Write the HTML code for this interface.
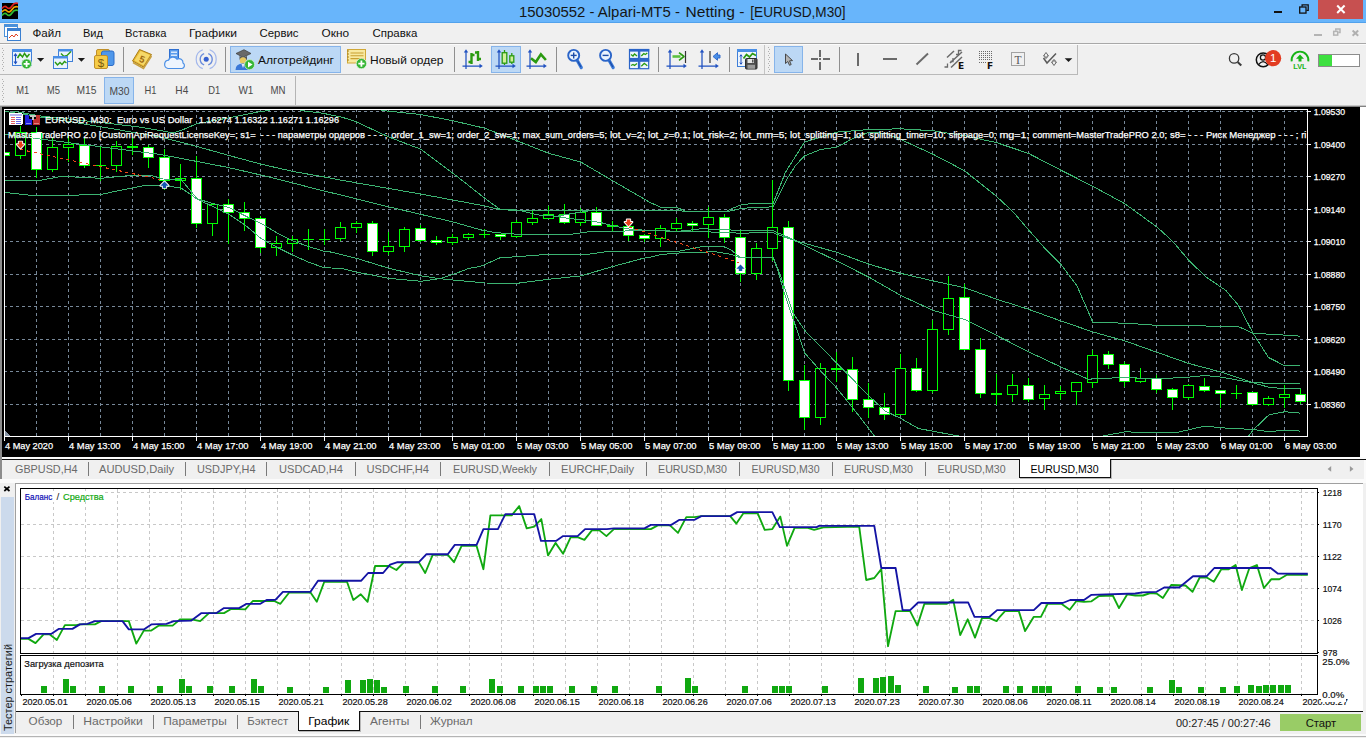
<!DOCTYPE html>
<html lang="ru"><head><meta charset="utf-8"><title>15030552 - Alpari-MT5 - Netting - [EURUSD,M30]</title>
<style>html,body{margin:0;padding:0;background:#f0f0f0;overflow:hidden}svg{display:block}text{white-space:pre}</style></head>
<body>
<svg width="1366" height="738" viewBox="0 0 1366 738" font-family="Liberation Sans, sans-serif" shape-rendering="crispEdges">
<rect x="0" y="0" width="1366" height="738" fill="#f0f0f0" />
<rect x="0" y="0" width="1366" height="22.5" fill="#68b5fb" />
<rect x="0" y="21.5" width="1366" height="1" fill="#52a2ec" />
<text x="519" y="16.8" font-size="14.3" fill="#151515" textLength="160.9" lengthAdjust="spacingAndGlyphs" >15030552 - Alpari-MT5 -</text>
<text x="685.5" y="16.8" font-size="14.3" fill="#151515" textLength="58.9" lengthAdjust="spacingAndGlyphs" >Netting -</text>
<text x="750.3" y="16.8" font-size="14.3" fill="#151515" textLength="95.3" lengthAdjust="spacingAndGlyphs" >[EURUSD,M30]</text>
<rect x="2" y="3" width="16" height="16" fill="#000" />
<g shape-rendering="auto" fill="none" stroke-width="1.7"><path d="M2 8.500 q2.500 -3.500 5 -1 t5 -1.500 t6 -2.500" stroke="#e02020"/><path d="M2 12 q2.500 -3.500 5 -1 t5 -1.500 t6 -2.500" stroke="#f0a000"/><path d="M2 15.500 q2.500 -3.500 5 -1 t5 -1.500 t6 -2.500" stroke="#30c030"/></g>
<rect x="1318" y="0" width="45" height="19" fill="#c75050" />
<g shape-rendering="auto" stroke="#fff" stroke-width="2"><line x1="1337.200" y1="5.500" x2="1344.600" y2="13"/><line x1="1344.600" y1="5.500" x2="1337.200" y2="13"/></g>
<rect x="1274" y="10.5" width="8" height="2.5" fill="#111" />
<g fill="none" stroke="#111" stroke-width="1.300" shape-rendering="auto"><path d="M1302.100 6.800 v-2 h6.100 v5.600 h-1.800"/><rect x="1299.700" y="7" width="6.300" height="6.100"/></g>
<rect x="0" y="22.5" width="1366" height="21" fill="#f0f0f0" />
<g><rect x="4.500" y="24.500" width="13" height="12" fill="#fff" stroke="#4a90d9"/><rect x="4" y="24" width="14" height="3" fill="#4a90d9"/><rect x="7.500" y="28.500" width="13" height="12" fill="#fff" stroke="#3a7fd0"/><rect x="7" y="28" width="14" height="3" fill="#3a7fd0"/><path d="M9 38 l3 -3 l2 2 l2 -3 l2 2" fill="none" stroke="#e04020" shape-rendering="auto"/></g>
<text x="32.5" y="37.3" font-size="11.6" fill="#111" textLength="28.5" lengthAdjust="spacingAndGlyphs" >Файл</text>
<text x="83" y="37.3" font-size="11.6" fill="#111" textLength="20" lengthAdjust="spacingAndGlyphs" >Вид</text>
<text x="125" y="37.3" font-size="11.6" fill="#111" textLength="41.5" lengthAdjust="spacingAndGlyphs" >Вставка</text>
<text x="189" y="37.3" font-size="11.6" fill="#111" textLength="48" lengthAdjust="spacingAndGlyphs" >Графики</text>
<text x="259.5" y="37.3" font-size="11.6" fill="#111" textLength="39" lengthAdjust="spacingAndGlyphs" >Сервис</text>
<text x="321.5" y="37.3" font-size="11.6" fill="#111" textLength="27.5" lengthAdjust="spacingAndGlyphs" >Окно</text>
<text x="372.5" y="37.3" font-size="11.6" fill="#111" textLength="45" lengthAdjust="spacingAndGlyphs" >Справка</text>
<rect x="1314" y="33.5" width="7.7" height="2.4" fill="#b4b4b4" />
<g fill="none" stroke="#b4b4b4" stroke-width="1.500" shape-rendering="auto"><path d="M1335.800 30.700 v-1.700 h4.200 v3.600 h-1.700"/><rect x="1333.700" y="31.400" width="4" height="3.700"/></g>
<g shape-rendering="auto" stroke="#b0b0b0" stroke-width="1.900"><line x1="1352.600" y1="30.500" x2="1358.200" y2="35.700"/><line x1="1358.200" y1="30.500" x2="1352.600" y2="35.700"/></g>
<rect x="0" y="43" width="1366" height="1" fill="#a8a8a8" />
<rect x="0" y="44" width="1366" height="1" fill="#fbfbfb" />
<rect x="0" y="74" width="1077" height="1" fill="#b9b9b9" />
<rect x="1076.5" y="45" width="1" height="30" fill="#b9b9b9" />
<rect x="2" y="48" width="1" height="1" fill="#b0b0b0" />
<rect x="3" y="50" width="1" height="1" fill="#b0b0b0" />
<rect x="2" y="52" width="1" height="1" fill="#b0b0b0" />
<rect x="3" y="54" width="1" height="1" fill="#b0b0b0" />
<rect x="2" y="56" width="1" height="1" fill="#b0b0b0" />
<rect x="3" y="58" width="1" height="1" fill="#b0b0b0" />
<rect x="2" y="60" width="1" height="1" fill="#b0b0b0" />
<rect x="3" y="62" width="1" height="1" fill="#b0b0b0" />
<rect x="2" y="64" width="1" height="1" fill="#b0b0b0" />
<rect x="3" y="66" width="1" height="1" fill="#b0b0b0" />
<rect x="2" y="68" width="1" height="1" fill="#b0b0b0" />
<rect x="3" y="70" width="1" height="1" fill="#b0b0b0" />
<rect x="2" y="79" width="1" height="1" fill="#b0b0b0" />
<rect x="3" y="81" width="1" height="1" fill="#b0b0b0" />
<rect x="2" y="83" width="1" height="1" fill="#b0b0b0" />
<rect x="3" y="85" width="1" height="1" fill="#b0b0b0" />
<rect x="2" y="87" width="1" height="1" fill="#b0b0b0" />
<rect x="3" y="89" width="1" height="1" fill="#b0b0b0" />
<rect x="2" y="91" width="1" height="1" fill="#b0b0b0" />
<rect x="3" y="93" width="1" height="1" fill="#b0b0b0" />
<rect x="2" y="95" width="1" height="1" fill="#b0b0b0" />
<rect x="3" y="97" width="1" height="1" fill="#b0b0b0" />
<rect x="2" y="99" width="1" height="1" fill="#b0b0b0" />
<rect x="3" y="101" width="1" height="1" fill="#b0b0b0" />
<g shape-rendering="auto">
<g><rect x="12.500" y="49.500" width="19" height="16" fill="#eaf3fd" stroke="#3f7fd8"/><rect x="12" y="49" width="20" height="3" fill="#4a8fe6"/><path d="M17.500 58 l2.500 -4 l2.500 3 l2 -3.500 l2.500 3.500 l2.500 -3" fill="none" stroke="#2a9a10" stroke-width="1.500"/><path d="M15.500 54 v9.500 M14 56 l1.500 -2 l1.500 2 M14 61.500 l1.500 2 l1.500 -2" stroke="#1f50c0" fill="none" stroke-width="1.100"/><circle cx="26.600" cy="63.900" r="5" fill="#35b535" stroke="#e8f8e8" stroke-width="0.700"/><path d="M23.600 63.900 h6 M26.600 60.900 v6" stroke="#fff" stroke-width="1.800"/></g>
<path d="M37 58 h7.200 l-3.600 3.700 z" fill="#1a1a1a"/>
<g><rect x="58.500" y="49.500" width="14" height="12" fill="#eaf3fd" stroke="#3f7fd8"/><rect x="58" y="49" width="15" height="2.500" fill="#4a8fe6"/><path d="M61 53.500 l3 3 l3 -1 l4 -4" fill="none" stroke="#2a9a10" stroke-width="1.400"/><rect x="53.500" y="56.500" width="14" height="12" fill="#eaf3fd" stroke="#3f7fd8"/><rect x="53" y="56" width="15" height="2.500" fill="#4a8fe6"/><path d="M55 62 l2.500 3 l2.500 -2.500 l2 2 l2.500 -3 l2 1.500" fill="none" stroke="#2a9a10" stroke-width="1.400"/></g>
<path d="M77.800 58 h7.200 l-3.600 3.700 z" fill="#1a1a1a"/>
<g><rect x="96.500" y="49.500" width="13" height="9" rx="1.500" fill="#f0c23a" stroke="#c0902a"/><rect x="101.500" y="51" width="12.500" height="14.500" rx="2" fill="#4f97ea" stroke="#2c6cc8"/><rect x="94.500" y="55.500" width="13" height="13" rx="1.500" fill="#f5cc48" stroke="#c0902a"/><text x="101" y="66.500" font-size="11.500" fill="#7a5a10" text-anchor="middle">$</text></g>
</g>
<rect x="123.0" y="47" width="1" height="25" fill="#8f8f8f" />
<g shape-rendering="auto">
<g><path d="M132.500 61 l7 -11.500 l12 5 l-8 12.500 z" fill="#e8b830" stroke="#a87c18"/><path d="M133 62.500 l10.500 6 l8 -12.500" fill="none" stroke="#c8a040" stroke-width="1.500"/><path d="M134.500 60.500 l6 -9.500 l9.500 4 l-6.500 10.500 z" fill="#f6d868"/><text x="142.300" y="62.500" font-size="9.500" font-weight="bold" fill="#a06a10" text-anchor="middle" transform="rotate(20 142 59)">5</text></g>
<g><rect x="169.500" y="49.500" width="9" height="11" fill="#5a9cec" stroke="#2f6fd0"/><rect x="171" y="51.500" width="6" height="1.500" fill="#d8e8fb"/><rect x="171" y="54.500" width="6" height="1.500" fill="#d8e8fb"/><path d="M168 68.500 a4.200 4.200 0 0 1 0.500 -8.300 a4.800 4.800 0 0 1 8.500 -1 a4 4 0 0 1 6 3.800 a3 3 0 0 1 -1 5.500 z" fill="#eef5fe" stroke="#4a8fe6" stroke-width="1.200"/></g>
<g fill="none"><circle cx="206.200" cy="59.200" r="2.500" fill="#3560d0"/><path d="M208.250 53.560 A6 6 0 0 1 208.250 64.840 M204.150 53.560 A6 6 0 0 0 204.150 64.840" stroke="#6a8cdc" stroke-width="1.400"/><path d="M209.620 49.800 A10 10 0 0 1 209.620 68.600 M202.780 49.800 A10 10 0 0 0 202.780 68.600" stroke="#a4b8ec" stroke-width="1.200"/></g>
</g>
<rect x="225.0" y="47" width="1" height="25" fill="#8f8f8f" />
<rect x="230.500" y="46.500" width="110" height="26" fill="#bcd8f5" stroke="#86b4ea"/>
<g shape-rendering="auto"><path d="M236 53.500 l8 -3.800 l7 3.800 l-8 3.800 z" fill="#6a6a6a" stroke="#3a3a3a" stroke-width="0.700"/><path d="M239.500 56 v3.500 q4 2 7.500 0 v-3.500 l-3.800 1.800 z" fill="#555"/><circle cx="243" cy="60.500" r="3.200" fill="#e8c860"/><path d="M235.500 70 q0 -6.500 7.500 -6.500 q7.500 0 7.500 6.500 z" fill="#3a78d8"/><path d="M241.500 64 l1.500 4 l1.500 -4" fill="#e8e8f8"/><circle cx="249.600" cy="64.600" r="5" fill="#35b535" stroke="#dff5df" stroke-width="0.700"/><path d="M248 61.800 l4.600 2.800 l-4.600 2.800 z" fill="#fff"/></g>
<text x="258" y="64" font-size="11.6" fill="#111" textLength="76" lengthAdjust="spacingAndGlyphs" >Алготрейдинг</text>
<g shape-rendering="auto"><rect x="347.500" y="49.500" width="18" height="13.500" fill="#f8e9a0" stroke="#d0a838"/><path d="M350.500 53 h13 M350.500 55.800 h13 M350.500 58.600 h13" stroke="#c8a030" stroke-width="1.100"/><path d="M347 51 h2 M347 54 h2 M347 57 h2 M347 60 h2" stroke="#a88020"/><circle cx="361.400" cy="63.600" r="5.200" fill="#35b535" stroke="#e8f8e8" stroke-width="0.700"/><path d="M358.300 63.600 h6.200 M361.400 60.500 v6.200" stroke="#fff" stroke-width="1.800"/></g>
<text x="370" y="64" font-size="11.6" fill="#111" textLength="73.5" lengthAdjust="spacingAndGlyphs" >Новый ордер</text>
<rect x="454.0" y="47" width="1" height="25" fill="#8f8f8f" />
<g shape-rendering="auto" fill="none">
<g stroke="#1f50c0" stroke-width="1.250" fill="#1f50c0"><path d="M466.0 51 v18 M462.5 66 h18" fill="none"/><path d="M463.8 52.500 l2.200 -3.300 l2.200 3.300 z" stroke="none"/><path d="M479.5 63.800 l3.300 2.200 l-3.300 2.200 z" stroke="none"/></g>
<g stroke="#2a9a10" stroke-width="2.400"><path d="M471.500 53 v11 M468.500 62 h3 M471.500 55 h3 M478 51 v10 M475 52.500 h3 M478 59 h3"/></g>
<rect x="491.500" y="46.500" width="29" height="26" fill="#bcd8f5" stroke="#86b4ea"/>
<g stroke="#1f50c0" stroke-width="1.250" fill="#1f50c0"><path d="M499.0 51 v18 M495.5 66 h18" fill="none"/><path d="M496.8 52.500 l2.200 -3.300 l2.200 3.300 z" stroke="none"/><path d="M512.5 63.800 l3.300 2.200 l-3.300 2.200 z" stroke="none"/></g>
<g stroke="#2a9a10" stroke-width="1.300" fill="#d2f09a"><path d="M504.500 50 v15 M511.800 53 v11"/><rect x="502.200" y="52.700" width="4.600" height="10.500"/><rect x="509.800" y="55.800" width="4" height="6.400"/></g>
<g stroke="#1f50c0" stroke-width="1.250" fill="#1f50c0"><path d="M530.0 51 v18 M526.5 66 h18" fill="none"/><path d="M527.8 52.500 l2.200 -3.300 l2.200 3.300 z" stroke="none"/><path d="M543.5 63.800 l3.300 2.200 l-3.300 2.200 z" stroke="none"/></g>
<path d="M531 58.300 l4.800 3.700 l5.100 -7.600 l5 5.600" stroke="#2a9a10" stroke-width="2.600"/>
</g>
<rect x="556.0" y="47" width="1" height="25" fill="#8f8f8f" />
<g shape-rendering="auto" fill="none">
<path d="M577.0 60 l4.300 7.600" stroke="#3a7ad8" stroke-width="3.200" stroke-linecap="round"/><path d="M577.7 61.200 l3.300 5.800" stroke="#1c4ca8" stroke-width="1.200"/>
<circle cx="573.7" cy="55.400" r="5.500" stroke="#2a64c8" stroke-width="1.900" fill="#eaf3fd"/>
<path d="M570.7 55.400 h6" stroke="#1c4ca8" stroke-width="1.400"/>
<path d="M573.7 52.400 v6" stroke="#1c4ca8" stroke-width="1.400"/>
<path d="M608.9 60 l4.300 7.600" stroke="#3a7ad8" stroke-width="3.200" stroke-linecap="round"/><path d="M609.6 61.200 l3.300 5.800" stroke="#1c4ca8" stroke-width="1.200"/>
<circle cx="605.6" cy="55.400" r="5.500" stroke="#2a64c8" stroke-width="1.900" fill="#eaf3fd"/>
<path d="M602.6 55.400 h6" stroke="#1c4ca8" stroke-width="1.400"/>
<rect x="629.5" y="49.5" width="9" height="9" fill="#eef5fd" stroke="#2a64c8" stroke-width="1.200"/><rect x="629.0" y="49.0" width="10" height="2.600" fill="#2a64c8"/>
<rect x="639.7" y="49.5" width="9" height="9" fill="#eef5fd" stroke="#2a64c8" stroke-width="1.200"/><rect x="639.2" y="49.0" width="10" height="2.600" fill="#2a64c8"/>
<rect x="629.5" y="59.7" width="9" height="9" fill="#eef5fd" stroke="#2a64c8" stroke-width="1.200"/><rect x="629.0" y="59.2" width="10" height="2.600" fill="#2a64c8"/>
<rect x="639.7" y="59.7" width="9" height="9" fill="#eef5fd" stroke="#2a64c8" stroke-width="1.200"/><rect x="639.2" y="59.2" width="10" height="2.600" fill="#2a64c8"/>
<g stroke="#2a9a10" stroke-width="1.300"><path d="M631 54.500 l2 1.500 l1.500 -2 l2.500 2 M641.300 56 l2.500 -2.500 l1.500 1 l2 -1.500 M631 65.500 l2 -1 l1.500 1 l2.500 -2 M641.300 66.300 l3 -3 l3 2.500"/></g>
</g>
<rect x="658.0" y="47" width="1" height="25" fill="#8f8f8f" />
<g shape-rendering="auto" fill="none">
<g stroke="#1f50c0" stroke-width="1.250" fill="#1f50c0"><path d="M670.0 51 v18 M666.5 66 h18" fill="none"/><path d="M667.8 52.500 l2.200 -3.300 l2.200 3.300 z" stroke="none"/><path d="M683.5 63.800 l3.300 2.200 l-3.300 2.200 z" stroke="none"/></g>
<path d="M685.500 51 v12" stroke="#333" stroke-width="1.200"/><path d="M672.500 56.500 h8" stroke="#5cc040" stroke-width="2.600"/><path d="M679 52.700 l5 3.800 l-5 3.800" stroke="#2a9a10" stroke-width="1.600" stroke-linejoin="round"/>
<g stroke="#1f50c0" stroke-width="1.250" fill="#1f50c0"><path d="M702.0 51 v18 M698.5 66 h18" fill="none"/><path d="M699.8 52.500 l2.200 -3.300 l2.200 3.300 z" stroke="none"/><path d="M715.5 63.800 l3.300 2.200 l-3.300 2.200 z" stroke="none"/></g>
<path d="M710 51 v12" stroke="#333" stroke-width="1.200"/><path d="M713 56.500 l4.500 -3.800 v2.300 h2.500 v3 h-2.500 v2.300 z" fill="#4a8fe6" stroke="#2a64c8" stroke-width="0.900"/>
</g>
<rect x="729.0" y="47" width="1" height="25" fill="#8f8f8f" />
<g shape-rendering="auto"><rect x="737.500" y="49.500" width="19" height="17" fill="#eef5fd" stroke="#3f7fd8"/><rect x="737" y="49" width="20" height="3" fill="#4a8fe6"/><path d="M741 55 v9 M739.800 56.500 l1.200 -1.800 l1.200 1.800 M739.800 62.500 l1.200 1.800 l1.200 -1.800" stroke="#1f50c0" fill="none" stroke-width="1"/><path d="M743.500 58.500 l3 -4 l3 2.500 l3 -3.500 l3.500 2" fill="none" stroke="#2a9a10" stroke-width="1.700"/><rect x="745.500" y="58.500" width="11.500" height="10.500" rx="1" fill="#4c4c4c" stroke="#2c2c2c"/><rect x="747.500" y="59" width="6.500" height="4" fill="#e4e4e4"/><rect x="752" y="59.500" width="1.500" height="3" fill="#555"/><rect x="747.500" y="64.800" width="7.500" height="4" fill="#9a9a9a"/></g>
<rect x="764" y="45" width="1" height="29" fill="#c4c4c4" />
<rect x="768" y="47" width="1" height="1" fill="#b0b0b0" />
<rect x="769" y="49" width="1" height="1" fill="#b0b0b0" />
<rect x="768" y="51" width="1" height="1" fill="#b0b0b0" />
<rect x="769" y="53" width="1" height="1" fill="#b0b0b0" />
<rect x="768" y="55" width="1" height="1" fill="#b0b0b0" />
<rect x="769" y="57" width="1" height="1" fill="#b0b0b0" />
<rect x="768" y="59" width="1" height="1" fill="#b0b0b0" />
<rect x="769" y="61" width="1" height="1" fill="#b0b0b0" />
<rect x="768" y="63" width="1" height="1" fill="#b0b0b0" />
<rect x="769" y="65" width="1" height="1" fill="#b0b0b0" />
<rect x="768" y="67" width="1" height="1" fill="#b0b0b0" />
<rect x="769" y="69" width="1" height="1" fill="#b0b0b0" />
<rect x="768" y="71" width="1" height="1" fill="#b0b0b0" />
<rect x="774.500" y="46.500" width="28" height="26" fill="#bcd8f5" stroke="#86b4ea"/>
<path d="M785.500 54 v9.500 l2.300 -2 l1.700 3.800 l1.700 -0.800 l-1.700 -3.700 l3 -0.200 z" fill="#b4b4b4" stroke="#3a3a3a" stroke-width="0.900" shape-rendering="auto"/>
<path d="M820 49.500 v7 M820 62 v7.500 M810.500 59 h7 M822.500 59 h7" stroke="#6a6a6a" stroke-width="1.700" fill="none"/><rect x="819.200" y="58.200" width="1.600" height="1.600" fill="#6a6a6a"/>
<rect x="839.0" y="47" width="1" height="25" fill="#8f8f8f" />
<rect x="857" y="52.5" width="1.7" height="13" fill="#6a6a6a" />
<rect x="883" y="58.3" width="14" height="1.7" fill="#6a6a6a" />
<g shape-rendering="auto" fill="none">
<path d="M916.500 64.500 l11.500 -11" stroke="#6a6a6a" stroke-width="1.900"/>
<g stroke="#6a6a6a" stroke-width="1.500"><path d="M947 57.500 l7 -6.500 M950 63 l12 -11 M951 67.500 l11 -10.500"/><path d="M944.500 67 h3 v-3.500 M950.500 61.500 h2.500 v-3.500 M956 54.500 h2.500 v-4 h3" stroke-width="1.300"/></g><text x="958" y="68.500" font-size="9" font-weight="bold" fill="#111" stroke="none" font-family="DejaVu Sans, sans-serif">E</text>
<g stroke="#6a6a6a" stroke-width="1" stroke-dasharray="1 1"><path d="M979 51.500 h13 M979 53.500 h13 M979 55.500 h13 M979 57.500 h13 M979 59.500 h13 M979 62.500 h8"/></g><text x="987" y="68.500" font-size="9" font-weight="bold" fill="#111" stroke="none" font-family="DejaVu Sans, sans-serif">F</text>
<rect x="1011.500" y="52.500" width="13" height="13" stroke="#555" stroke-dasharray="1 1"/><text x="1018" y="63.500" font-size="11.500" fill="#555" stroke="none" text-anchor="middle" font-family="Liberation Serif, serif">T</text>
<g stroke="#5a5a5a" stroke-width="1.200"><path d="M1043.500 58 l3.500 5 l9 -9.500" stroke-width="1.500"/><path d="M1043.500 56 l2.500 -3.500 l2.500 3.500 h-1.500 v2 h-2 v-2 z" fill="#f0f0f0" stroke-width="0.900"/><path d="M1051.500 62 h1.500 v-2 h2 v2 h1.500 l-2.500 3.500 z" fill="#f0f0f0" stroke-width="0.900"/></g>
<path d="M1064.700 58.300 h7.600 l-3.800 3.800 z" fill="#1a1a1a"/>
</g>
<g shape-rendering="auto" fill="none">
<circle cx="1234.100" cy="58.400" r="4.700" stroke="#3a3a3a" stroke-width="1.300"/><path d="M1237.600 62 l3.700 3.500" stroke="#3a3a3a" stroke-width="2"/>
<circle cx="1263.200" cy="59.800" r="6.900" stroke="#111" stroke-width="1.500"/><circle cx="1263" cy="57.500" r="2.600" stroke="#111" stroke-width="1.300"/><path d="M1258.300 64.800 q4.700 -6.500 9.700 0" stroke="#111" stroke-width="1.300"/>
<circle cx="1273.100" cy="58.200" r="8.100" fill="#e23c22"/><text x="1273.100" y="62.300" font-size="11.500" fill="#fff" text-anchor="middle">1</text>
<path d="M1291.700 61.300 a8.400 8.400 0 1 1 16.600 0" stroke="#16b416" stroke-width="1.900"/><path d="M1300 54.400 l4 4.300 h-2.500 v2.800 h-3 v-2.800 h-2.500 z" fill="#16b416"/><text x="1293.200" y="69" font-size="7.800" font-weight="bold" fill="#16b416" textLength="13.400" lengthAdjust="spacingAndGlyphs">LVL</text>
</g>
<rect x="1318.500" y="54.500" width="41" height="12" fill="#fff" stroke="#8c8c8c"/>
<rect x="1319" y="55" width="13" height="11" fill="#3ee040" />
<rect x="104.500" y="77.500" width="29" height="26" fill="#bcd8f5" stroke="#86b4ea"/>
<text x="16.3" y="94.2" font-size="10.4" fill="#4a4a4a" textLength="13" lengthAdjust="spacingAndGlyphs" >M1</text>
<text x="46.8" y="94.2" font-size="10.4" fill="#4a4a4a" textLength="13.2" lengthAdjust="spacingAndGlyphs" >M5</text>
<text x="76.4" y="94.2" font-size="10.4" fill="#4a4a4a" textLength="20" lengthAdjust="spacingAndGlyphs" >M15</text>
<text x="109.4" y="95" font-size="10.4" fill="#4a4a4a" textLength="20" lengthAdjust="spacingAndGlyphs" >M30</text>
<text x="144.5" y="94.2" font-size="10.4" fill="#4a4a4a" textLength="12" lengthAdjust="spacingAndGlyphs" >H1</text>
<text x="175.3" y="94.2" font-size="10.4" fill="#4a4a4a" textLength="13" lengthAdjust="spacingAndGlyphs" >H4</text>
<text x="208.3" y="94.2" font-size="10.4" fill="#4a4a4a" textLength="12" lengthAdjust="spacingAndGlyphs" >D1</text>
<text x="238.4" y="94.2" font-size="10.4" fill="#4a4a4a" textLength="15" lengthAdjust="spacingAndGlyphs" >W1</text>
<text x="270.4" y="94.2" font-size="10.4" fill="#4a4a4a" textLength="15" lengthAdjust="spacingAndGlyphs" >MN</text>
<rect x="295" y="76" width="1" height="29" fill="#b4b4b4" />
<rect x="0" y="104.5" width="1366" height="1" fill="#c8c8c8" />
<rect x="0" y="105.5" width="1366" height="1.2" fill="#828282" />
<rect x="0" y="106.7" width="1361" height="350.3" fill="#000" />
<rect x="0" y="106" width="1.6" height="351" fill="#8c8c8c" />
<rect x="1360.2" y="106.7" width="6" height="352" fill="#fff" />
<defs><clipPath id="cc"><rect x="4" y="109" width="1303.500" height="327.500"/></clipPath></defs>
<g stroke="#778899" stroke-width="1" stroke-dasharray="3 3" clip-path="url(#cc)">
<line x1="36.5" y1="109" x2="36.5" y2="436"/>
<line x1="68.5" y1="109" x2="68.5" y2="436"/>
<line x1="100.5" y1="109" x2="100.5" y2="436"/>
<line x1="132.5" y1="109" x2="132.5" y2="436"/>
<line x1="164.5" y1="109" x2="164.5" y2="436"/>
<line x1="196.5" y1="109" x2="196.5" y2="436"/>
<line x1="228.5" y1="109" x2="228.5" y2="436"/>
<line x1="260.5" y1="109" x2="260.5" y2="436"/>
<line x1="292.5" y1="109" x2="292.5" y2="436"/>
<line x1="324.5" y1="109" x2="324.5" y2="436"/>
<line x1="356.5" y1="109" x2="356.5" y2="436"/>
<line x1="388.5" y1="109" x2="388.5" y2="436"/>
<line x1="420.5" y1="109" x2="420.5" y2="436"/>
<line x1="452.5" y1="109" x2="452.5" y2="436"/>
<line x1="484.5" y1="109" x2="484.5" y2="436"/>
<line x1="516.5" y1="109" x2="516.5" y2="436"/>
<line x1="548.5" y1="109" x2="548.5" y2="436"/>
<line x1="580.5" y1="109" x2="580.5" y2="436"/>
<line x1="612.5" y1="109" x2="612.5" y2="436"/>
<line x1="644.5" y1="109" x2="644.5" y2="436"/>
<line x1="676.5" y1="109" x2="676.5" y2="436"/>
<line x1="708.5" y1="109" x2="708.5" y2="436"/>
<line x1="740.5" y1="109" x2="740.5" y2="436"/>
<line x1="772.5" y1="109" x2="772.5" y2="436"/>
<line x1="804.5" y1="109" x2="804.5" y2="436"/>
<line x1="836.5" y1="109" x2="836.5" y2="436"/>
<line x1="868.5" y1="109" x2="868.5" y2="436"/>
<line x1="900.5" y1="109" x2="900.5" y2="436"/>
<line x1="932.5" y1="109" x2="932.5" y2="436"/>
<line x1="964.5" y1="109" x2="964.5" y2="436"/>
<line x1="996.5" y1="109" x2="996.5" y2="436"/>
<line x1="1028.5" y1="109" x2="1028.5" y2="436"/>
<line x1="1060.5" y1="109" x2="1060.5" y2="436"/>
<line x1="1092.5" y1="109" x2="1092.5" y2="436"/>
<line x1="1124.5" y1="109" x2="1124.5" y2="436"/>
<line x1="1156.5" y1="109" x2="1156.5" y2="436"/>
<line x1="1188.5" y1="109" x2="1188.5" y2="436"/>
<line x1="1220.5" y1="109" x2="1220.5" y2="436"/>
<line x1="1252.5" y1="109" x2="1252.5" y2="436"/>
<line x1="1284.5" y1="109" x2="1284.5" y2="436"/>
<line x1="4" y1="111.5" x2="1307" y2="111.5"/>
<line x1="4" y1="144.5" x2="1307" y2="144.5"/>
<line x1="4" y1="176.5" x2="1307" y2="176.5"/>
<line x1="4" y1="209.5" x2="1307" y2="209.5"/>
<line x1="4" y1="241.5" x2="1307" y2="241.5"/>
<line x1="4" y1="274.5" x2="1307" y2="274.5"/>
<line x1="4" y1="306.5" x2="1307" y2="306.5"/>
<line x1="4" y1="339.5" x2="1307" y2="339.5"/>
<line x1="4" y1="371.5" x2="1307" y2="371.5"/>
<line x1="4" y1="404.5" x2="1307" y2="404.5"/>
</g>
<g clip-path="url(#cc)">
<rect x="4" y="152" width="1" height="4" fill="#00ff00" />
<rect x="-1" y="152" width="11" height="4" fill="#00ff00" />
<rect x="0" y="153" width="9" height="2" fill="#ffffff" />
<rect x="20" y="126" width="1" height="33" fill="#00ff00" />
<rect x="15" y="132" width="11" height="24" fill="#00ff00" />
<rect x="16" y="133" width="9" height="22" fill="#000000" />
<rect x="36" y="127" width="1" height="51" fill="#00ff00" />
<rect x="31" y="132" width="11" height="38" fill="#00ff00" />
<rect x="32" y="133" width="9" height="36" fill="#ffffff" />
<rect x="52" y="138" width="1" height="34" fill="#00ff00" />
<rect x="47" y="147" width="11" height="23" fill="#00ff00" />
<rect x="48" y="148" width="9" height="21" fill="#000000" />
<rect x="68" y="136" width="1" height="26" fill="#00ff00" />
<rect x="63" y="144" width="11" height="4" fill="#00ff00" />
<rect x="64" y="145" width="9" height="2" fill="#000000" />
<rect x="84" y="138" width="1" height="30" fill="#00ff00" />
<rect x="79" y="145" width="11" height="21" fill="#00ff00" />
<rect x="80" y="146" width="9" height="19" fill="#ffffff" />
<rect x="100" y="147" width="1" height="34" fill="#00ff00" />
<rect x="95" y="165" width="11" height="1" fill="#00ff00" />
<rect x="116" y="141" width="1" height="31" fill="#00ff00" />
<rect x="111" y="146" width="11" height="20" fill="#00ff00" />
<rect x="112" y="147" width="9" height="18" fill="#000000" />
<rect x="132" y="136" width="1" height="19" fill="#00ff00" />
<rect x="127" y="146" width="11" height="2" fill="#00ff00" />
<rect x="148" y="145" width="1" height="23" fill="#00ff00" />
<rect x="143" y="147" width="11" height="11" fill="#00ff00" />
<rect x="144" y="148" width="9" height="9" fill="#ffffff" />
<rect x="164" y="149" width="1" height="41" fill="#00ff00" />
<rect x="159" y="157" width="11" height="24" fill="#00ff00" />
<rect x="160" y="158" width="9" height="22" fill="#ffffff" />
<rect x="180" y="164" width="1" height="26" fill="#00ff00" />
<rect x="175" y="178" width="11" height="3" fill="#00ff00" />
<rect x="176" y="179" width="9" height="1" fill="#000000" />
<rect x="196" y="156" width="1" height="72" fill="#00ff00" />
<rect x="191" y="178" width="11" height="46" fill="#00ff00" />
<rect x="192" y="179" width="9" height="44" fill="#ffffff" />
<rect x="212" y="204" width="1" height="32" fill="#00ff00" />
<rect x="207" y="204" width="11" height="20" fill="#00ff00" />
<rect x="208" y="205" width="9" height="18" fill="#000000" />
<rect x="228" y="199" width="1" height="45" fill="#00ff00" />
<rect x="223" y="204" width="11" height="9" fill="#00ff00" />
<rect x="224" y="205" width="9" height="7" fill="#ffffff" />
<rect x="244" y="202" width="1" height="29" fill="#00ff00" />
<rect x="239" y="212" width="11" height="7" fill="#00ff00" />
<rect x="240" y="213" width="9" height="5" fill="#ffffff" />
<rect x="260" y="216" width="1" height="37" fill="#00ff00" />
<rect x="255" y="218" width="11" height="30" fill="#00ff00" />
<rect x="256" y="219" width="9" height="28" fill="#ffffff" />
<rect x="276" y="236" width="1" height="20" fill="#00ff00" />
<rect x="271" y="243" width="11" height="5" fill="#00ff00" />
<rect x="272" y="244" width="9" height="3" fill="#000000" />
<rect x="292" y="236" width="1" height="16" fill="#00ff00" />
<rect x="287" y="239" width="11" height="5" fill="#00ff00" />
<rect x="288" y="240" width="9" height="3" fill="#000000" />
<rect x="308" y="229" width="1" height="21" fill="#00ff00" />
<rect x="303" y="239" width="11" height="1" fill="#00ff00" />
<rect x="324" y="229" width="1" height="16" fill="#00ff00" />
<rect x="319" y="239" width="11" height="1" fill="#00ff00" />
<rect x="340" y="222" width="1" height="19" fill="#00ff00" />
<rect x="335" y="227" width="11" height="12" fill="#00ff00" />
<rect x="336" y="228" width="9" height="10" fill="#000000" />
<rect x="356" y="221" width="1" height="12" fill="#00ff00" />
<rect x="351" y="223" width="11" height="5" fill="#00ff00" />
<rect x="352" y="224" width="9" height="3" fill="#000000" />
<rect x="372" y="221" width="1" height="35" fill="#00ff00" />
<rect x="367" y="223" width="11" height="29" fill="#00ff00" />
<rect x="368" y="224" width="9" height="27" fill="#ffffff" />
<rect x="388" y="232" width="1" height="23" fill="#00ff00" />
<rect x="383" y="246" width="11" height="6" fill="#00ff00" />
<rect x="384" y="247" width="9" height="4" fill="#000000" />
<rect x="404" y="227" width="1" height="25" fill="#00ff00" />
<rect x="399" y="229" width="11" height="18" fill="#00ff00" />
<rect x="400" y="230" width="9" height="16" fill="#000000" />
<rect x="420" y="225" width="1" height="17" fill="#00ff00" />
<rect x="415" y="228" width="11" height="13" fill="#00ff00" />
<rect x="416" y="229" width="9" height="11" fill="#ffffff" />
<rect x="436" y="236" width="1" height="9" fill="#00ff00" />
<rect x="431" y="240" width="11" height="3" fill="#00ff00" />
<rect x="432" y="241" width="9" height="1" fill="#ffffff" />
<rect x="452" y="234" width="1" height="11" fill="#00ff00" />
<rect x="447" y="237" width="11" height="6" fill="#00ff00" />
<rect x="448" y="238" width="9" height="4" fill="#000000" />
<rect x="468" y="233" width="1" height="7" fill="#00ff00" />
<rect x="463" y="234" width="11" height="4" fill="#00ff00" />
<rect x="464" y="235" width="9" height="2" fill="#000000" />
<rect x="484" y="229" width="1" height="9" fill="#00ff00" />
<rect x="479" y="234" width="11" height="1" fill="#00ff00" />
<rect x="500" y="234" width="1" height="6" fill="#00ff00" />
<rect x="495" y="234" width="11" height="3" fill="#00ff00" />
<rect x="496" y="235" width="9" height="1" fill="#ffffff" />
<rect x="516" y="220" width="1" height="18" fill="#00ff00" />
<rect x="511" y="222" width="11" height="15" fill="#00ff00" />
<rect x="512" y="223" width="9" height="13" fill="#000000" />
<rect x="532" y="211" width="1" height="14" fill="#00ff00" />
<rect x="527" y="218" width="11" height="5" fill="#00ff00" />
<rect x="528" y="219" width="9" height="3" fill="#000000" />
<rect x="548" y="206" width="1" height="13" fill="#00ff00" />
<rect x="543" y="214" width="11" height="5" fill="#00ff00" />
<rect x="544" y="215" width="9" height="3" fill="#000000" />
<rect x="564" y="204" width="1" height="20" fill="#00ff00" />
<rect x="559" y="214" width="11" height="9" fill="#00ff00" />
<rect x="560" y="215" width="9" height="7" fill="#ffffff" />
<rect x="580" y="208" width="1" height="18" fill="#00ff00" />
<rect x="575" y="212" width="11" height="11" fill="#00ff00" />
<rect x="576" y="213" width="9" height="9" fill="#000000" />
<rect x="596" y="207" width="1" height="19" fill="#00ff00" />
<rect x="591" y="212" width="11" height="14" fill="#00ff00" />
<rect x="592" y="213" width="9" height="12" fill="#ffffff" />
<rect x="612" y="221" width="1" height="10" fill="#00ff00" />
<rect x="607" y="225" width="11" height="2" fill="#00ff00" />
<rect x="628" y="220" width="1" height="21" fill="#00ff00" />
<rect x="623" y="226" width="11" height="10" fill="#00ff00" />
<rect x="624" y="227" width="9" height="8" fill="#ffffff" />
<rect x="644" y="234" width="1" height="8" fill="#00ff00" />
<rect x="639" y="235" width="11" height="4" fill="#00ff00" />
<rect x="640" y="236" width="9" height="2" fill="#ffffff" />
<rect x="660" y="225" width="1" height="22" fill="#00ff00" />
<rect x="655" y="228" width="11" height="11" fill="#00ff00" />
<rect x="656" y="229" width="9" height="9" fill="#000000" />
<rect x="676" y="218" width="1" height="13" fill="#00ff00" />
<rect x="671" y="223" width="11" height="6" fill="#00ff00" />
<rect x="672" y="224" width="9" height="4" fill="#000000" />
<rect x="692" y="221" width="1" height="10" fill="#00ff00" />
<rect x="687" y="223" width="11" height="3" fill="#00ff00" />
<rect x="688" y="224" width="9" height="1" fill="#ffffff" />
<rect x="708" y="207" width="1" height="31" fill="#00ff00" />
<rect x="703" y="217" width="11" height="8" fill="#00ff00" />
<rect x="704" y="218" width="9" height="6" fill="#000000" />
<rect x="724" y="214" width="1" height="29" fill="#00ff00" />
<rect x="719" y="217" width="11" height="21" fill="#00ff00" />
<rect x="720" y="218" width="9" height="19" fill="#ffffff" />
<rect x="740" y="231" width="1" height="51" fill="#00ff00" />
<rect x="735" y="237" width="11" height="37" fill="#00ff00" />
<rect x="736" y="238" width="9" height="35" fill="#ffffff" />
<rect x="756" y="243" width="1" height="37" fill="#00ff00" />
<rect x="751" y="248" width="11" height="26" fill="#00ff00" />
<rect x="752" y="249" width="9" height="24" fill="#000000" />
<rect x="772" y="180" width="1" height="81" fill="#00ff00" />
<rect x="767" y="227" width="11" height="22" fill="#00ff00" />
<rect x="768" y="228" width="9" height="20" fill="#000000" />
<rect x="788" y="221" width="1" height="170" fill="#00ff00" />
<rect x="783" y="227" width="11" height="154" fill="#00ff00" />
<rect x="784" y="228" width="9" height="152" fill="#ffffff" />
<rect x="804" y="365" width="1" height="65" fill="#00ff00" />
<rect x="799" y="380" width="11" height="38" fill="#00ff00" />
<rect x="800" y="381" width="9" height="36" fill="#ffffff" />
<rect x="820" y="363" width="1" height="62" fill="#00ff00" />
<rect x="815" y="368" width="11" height="50" fill="#00ff00" />
<rect x="816" y="369" width="9" height="48" fill="#000000" />
<rect x="836" y="352" width="1" height="30" fill="#00ff00" />
<rect x="831" y="368" width="11" height="2" fill="#00ff00" />
<rect x="852" y="357" width="1" height="55" fill="#00ff00" />
<rect x="847" y="369" width="11" height="31" fill="#00ff00" />
<rect x="848" y="370" width="9" height="29" fill="#ffffff" />
<rect x="868" y="383" width="1" height="35" fill="#00ff00" />
<rect x="863" y="399" width="11" height="9" fill="#00ff00" />
<rect x="864" y="400" width="9" height="7" fill="#ffffff" />
<rect x="884" y="393" width="1" height="27" fill="#00ff00" />
<rect x="879" y="407" width="11" height="8" fill="#00ff00" />
<rect x="880" y="408" width="9" height="6" fill="#ffffff" />
<rect x="900" y="354" width="1" height="61" fill="#00ff00" />
<rect x="895" y="368" width="11" height="47" fill="#00ff00" />
<rect x="896" y="369" width="9" height="45" fill="#000000" />
<rect x="916" y="358" width="1" height="34" fill="#00ff00" />
<rect x="911" y="368" width="11" height="23" fill="#00ff00" />
<rect x="912" y="369" width="9" height="21" fill="#ffffff" />
<rect x="932" y="320" width="1" height="73" fill="#00ff00" />
<rect x="927" y="329" width="11" height="62" fill="#00ff00" />
<rect x="928" y="330" width="9" height="60" fill="#000000" />
<rect x="948" y="276" width="1" height="59" fill="#00ff00" />
<rect x="943" y="298" width="11" height="32" fill="#00ff00" />
<rect x="944" y="299" width="9" height="30" fill="#000000" />
<rect x="964" y="284" width="1" height="66" fill="#00ff00" />
<rect x="959" y="297" width="11" height="53" fill="#00ff00" />
<rect x="960" y="298" width="9" height="51" fill="#ffffff" />
<rect x="980" y="338" width="1" height="60" fill="#00ff00" />
<rect x="975" y="349" width="11" height="45" fill="#00ff00" />
<rect x="976" y="350" width="9" height="43" fill="#ffffff" />
<rect x="996" y="374" width="1" height="31" fill="#00ff00" />
<rect x="991" y="393" width="11" height="2" fill="#00ff00" />
<rect x="1012" y="374" width="1" height="28" fill="#00ff00" />
<rect x="1007" y="385" width="11" height="10" fill="#00ff00" />
<rect x="1008" y="386" width="9" height="8" fill="#000000" />
<rect x="1028" y="378" width="1" height="24" fill="#00ff00" />
<rect x="1023" y="385" width="11" height="15" fill="#00ff00" />
<rect x="1024" y="386" width="9" height="13" fill="#ffffff" />
<rect x="1044" y="385" width="1" height="25" fill="#00ff00" />
<rect x="1039" y="394" width="11" height="5" fill="#00ff00" />
<rect x="1040" y="395" width="9" height="3" fill="#000000" />
<rect x="1060" y="386" width="1" height="14" fill="#00ff00" />
<rect x="1055" y="391" width="11" height="3" fill="#00ff00" />
<rect x="1056" y="392" width="9" height="1" fill="#000000" />
<rect x="1076" y="382" width="1" height="23" fill="#00ff00" />
<rect x="1071" y="382" width="11" height="10" fill="#00ff00" />
<rect x="1072" y="383" width="9" height="8" fill="#000000" />
<rect x="1092" y="350" width="1" height="38" fill="#00ff00" />
<rect x="1087" y="355" width="11" height="28" fill="#00ff00" />
<rect x="1088" y="356" width="9" height="26" fill="#000000" />
<rect x="1108" y="351" width="1" height="18" fill="#00ff00" />
<rect x="1103" y="354" width="11" height="11" fill="#00ff00" />
<rect x="1104" y="355" width="9" height="9" fill="#ffffff" />
<rect x="1124" y="362" width="1" height="25" fill="#00ff00" />
<rect x="1119" y="364" width="11" height="18" fill="#00ff00" />
<rect x="1120" y="365" width="9" height="16" fill="#ffffff" />
<rect x="1140" y="368" width="1" height="15" fill="#00ff00" />
<rect x="1135" y="378" width="11" height="4" fill="#00ff00" />
<rect x="1136" y="379" width="9" height="2" fill="#000000" />
<rect x="1156" y="375" width="1" height="18" fill="#00ff00" />
<rect x="1151" y="378" width="11" height="12" fill="#00ff00" />
<rect x="1152" y="379" width="9" height="10" fill="#ffffff" />
<rect x="1172" y="388" width="1" height="22" fill="#00ff00" />
<rect x="1167" y="389" width="11" height="9" fill="#00ff00" />
<rect x="1168" y="390" width="9" height="7" fill="#ffffff" />
<rect x="1188" y="384" width="1" height="16" fill="#00ff00" />
<rect x="1183" y="385" width="11" height="13" fill="#00ff00" />
<rect x="1184" y="386" width="9" height="11" fill="#000000" />
<rect x="1204" y="378" width="1" height="14" fill="#00ff00" />
<rect x="1199" y="386" width="11" height="5" fill="#00ff00" />
<rect x="1200" y="387" width="9" height="3" fill="#ffffff" />
<rect x="1220" y="390" width="1" height="18" fill="#00ff00" />
<rect x="1215" y="390" width="11" height="4" fill="#00ff00" />
<rect x="1216" y="391" width="9" height="2" fill="#ffffff" />
<rect x="1236" y="385" width="1" height="14" fill="#00ff00" />
<rect x="1231" y="393" width="11" height="1" fill="#00ff00" />
<rect x="1252" y="392" width="1" height="14" fill="#00ff00" />
<rect x="1247" y="392" width="11" height="13" fill="#00ff00" />
<rect x="1248" y="393" width="9" height="11" fill="#ffffff" />
<rect x="1268" y="396" width="1" height="10" fill="#00ff00" />
<rect x="1263" y="398" width="11" height="7" fill="#00ff00" />
<rect x="1264" y="399" width="9" height="5" fill="#000000" />
<rect x="1284" y="385" width="1" height="23" fill="#00ff00" />
<rect x="1279" y="394" width="11" height="4" fill="#00ff00" />
<rect x="1280" y="395" width="9" height="2" fill="#000000" />
<rect x="1300" y="388" width="1" height="16" fill="#00ff00" />
<rect x="1295" y="394" width="11" height="8" fill="#00ff00" />
<rect x="1296" y="395" width="9" height="6" fill="#ffffff" />
</g>
<g fill="none" stroke="#3cb371" stroke-width="1" shape-rendering="crispEdges" clip-path="url(#cc)">
<polyline points="13.5,111.3 41.1,116.0 100.5,122.5 135.5,126.5 160.5,130.5 173.5,133.0 183.5,129.5 197.1,123.5 228.2,118.0 258.1,112.0 268.5,110.5 275.5,108.5"/>
<polyline points="295.5,108.5 301.5,110.5 323.1,113.3 342.5,117.4 355.5,121.5 388.8,137.0 420.5,149.1 453.2,173.4 485.0,198.4 499.5,209.0 520.5,210.3 588.5,210.8 662.5,210.8 677.5,210.5 685.5,211.5 726.5,211.8 742.5,208.2 773.1,206.8 788.1,177.2 795.5,165.5 804.5,155.9 820.5,149.5 837.0,147.1 853.3,138.3 869.5,132.1 885.5,133.5 900.9,139.5 933.5,154.5 964.8,170.9 996.1,196.0 1013.5,212.3 1028.5,229.8 1045.0,248.5 1061.3,264.9 1076.8,285.5 1093.0,322.7 1125.5,323.1 1157.3,325.4 1188.8,325.4 1220.9,326.5 1238.3,326.5 1253.1,333.3 1285.1,335.1 1300.2,336.2"/>
<polyline points="375.5,108.5 382.5,110.5 420.5,114.5 453.2,120.8 485.0,128.3 517.0,140.8 548.8,153.3 580.9,162.1 612.9,180.9 645.0,199.5 650.5,202.7 661.3,207.4 677.5,207.8 685.5,211.1 726.5,211.1 739.9,205.1 750.8,203.7 773.1,203.4 785.5,172.2 804.5,142.1 837.0,132.1 869.5,129.5 900.9,128.8 933.5,130.8 964.8,135.8 996.1,142.5 1028.5,153.4 1061.0,170.2 1092.2,186.0 1124.5,203.5 1157.3,227.3 1172.4,241.1 1188.5,259.9 1205.0,276.2 1225.9,290.5 1238.3,305.1 1253.1,333.3 1268.5,357.5 1285.1,365.9 1300.2,365.9"/>
<polyline points="5.5,111.5 81.5,123.5 160.5,137.0 197.1,146.5 228.2,155.3 260.8,164.1 293.3,171.5 324.5,177.0 342.5,180.4 420.5,194.0 485.1,206.0 499.5,209.5 521.1,210.8 537.5,214.9 556.4,216.2 567.2,218.3 588.9,220.5 602.5,223.0 616.0,226.5 629.5,229.1 643.1,230.1 662.5,230.5 669.5,231.5 685.5,230.8 700.5,228.8 726.5,229.5 737.2,230.8 773.1,230.8 777.9,232.8 796.8,241.0 837.0,252.4 869.5,264.4 900.9,273.4 933.5,281.0 965.0,287.8 997.1,299.4 1028.9,309.4 1061.0,321.0 1093.1,332.0 1125.5,341.1 1157.3,352.4 1188.8,363.5 1220.9,372.0 1253.1,382.8 1285.1,383.5 1300.2,383.9"/>
<polyline points="556.4,216.2 572.5,213.5 588.9,210.8"/>
<polyline points="5.5,134.5 160.5,154.5 197.1,161.5 228.2,167.5 260.8,175.0 293.3,183.1 324.5,191.2 342.5,195.3 388.9,206.9 453.0,221.9 480.5,229.8 494.1,232.5 525.2,234.9 567.2,234.9 588.9,231.8 602.5,231.2 662.5,230.7 685.5,231.7 726.5,232.2 737.2,233.1 773.1,232.8 796.8,241.5 837.0,261.1 869.5,277.5 900.8,295.5 933.4,310.5 965.0,319.5 997.1,335.7 1028.9,352.0 1061.0,367.0 1088.8,379.5 1093.1,378.7 1125.5,377.5 1157.3,378.9 1188.8,377.1 1205.0,375.5 1220.9,377.1 1253.1,382.8 1269.1,387.3 1285.1,388.8 1300.8,388.8"/>
<polyline points="5.5,180.5 37.1,181.0 61.5,176.3 100.5,178.3 136.0,175.0 149.5,175.0 163.1,179.0 181.0,179.5 197.2,198.8 213.1,203.6 229.1,207.4 245.0,215.8 261.0,223.4 277.6,233.2 292.8,240.8 309.5,246.9 324.7,251.4 330.5,252.0 356.5,258.3 388.9,268.3 421.0,275.8 440.5,278.8 485.1,283.0 517.2,283.3 548.3,279.3 580.8,275.9 613.3,266.4 643.1,258.3 650.5,257.2 661.3,254.5 685.5,252.5 715.5,251.8 731.8,254.5 739.9,257.9 773.1,257.9 777.9,270.5 784.3,293.1 804.8,353.2 820.5,370.8 836.9,388.3 853.2,408.4 874.5,436.0 876.5,438.5"/>
<polyline points="5.5,192.5 37.1,196.0 100.5,194.5 122.5,189.9 146.5,185.1 156.3,185.1 163.1,186.1 180.5,187.5 197.2,199.1 213.1,206.7 229.1,214.3 245.0,224.9 261.0,238.5 277.6,247.6 292.8,255.2 309.5,262.5 323.5,267.5 342.5,268.7 356.5,272.1 388.9,278.3 421.0,281.3 440.5,278.5 453.0,274.5 469.1,268.3 480.5,266.4 499.5,258.0 540.1,254.9 588.9,254.2 605.2,251.9 650.5,251.8 677.5,251.5 704.7,246.1 723.5,246.5 731.8,250.5 739.9,257.2 773.1,257.2 780.5,275.5 793.1,313.1 804.8,330.5 836.9,363.3 869.0,395.9 885.0,410.9 900.8,418.5 918.4,428.5 958.5,436.0 975.5,438.5"/>
<polyline points="1095.5,438.5 1101.0,436.3 1125.5,431.8 1157.3,432.9 1175.3,432.9 1205.0,426.0 1220.9,427.8 1253.1,429.5 1269.1,431.8 1285.1,430.0 1300.2,431.1"/>
<polyline points="1246.5,438.5 1248.4,436.3 1253.1,430.0 1269.1,414.7 1285.1,411.7 1300.2,413.1"/>
</g>
<g stroke="#f04818" stroke-width="1" stroke-dasharray="3 3.700" shape-rendering="crispEdges"><line x1="20.500" y1="149.500" x2="160" y2="179.500"/><line x1="629" y1="227" x2="739" y2="262.500"/></g>
<g shape-rendering="auto" transform="translate(20.5,145)"><path d="M-1.700 -3.400 h3.400 v2.600 h2.200 l-3.900 4.300 l-3.900 -4.300 h2.200 z" fill="#e8401c" stroke="#fff" stroke-width="1.900" stroke-linejoin="round" paint-order="stroke"/></g>
<g shape-rendering="auto" transform="translate(628.5,222.8)"><path d="M-1.700 -3.400 h3.400 v2.600 h2.200 l-3.900 4.300 l-3.900 -4.300 h2.200 z" fill="#e8401c" stroke="#fff" stroke-width="1.900" stroke-linejoin="round" paint-order="stroke"/></g>
<g shape-rendering="auto" transform="translate(164.5,185)"><path d="M-1.700 2.900 h3.400 v-2.200 h2.400 l-4.100 -4.200 l-4.100 4.200 h2.400 z" fill="#1558b0" stroke="#fff" stroke-width="1.900" stroke-linejoin="round" paint-order="stroke"/></g>
<g shape-rendering="auto" transform="translate(740.5,268)"><path d="M-1.700 2.900 h3.400 v-2.200 h2.400 l-4.100 -4.200 l-4.100 4.200 h2.400 z" fill="#1558b0" stroke="#fff" stroke-width="1.900" stroke-linejoin="round" paint-order="stroke"/></g>
<rect x="4.500" y="109.500" width="1303" height="327" fill="none" stroke="#fff"/>
<rect x="1308" y="111" width="3" height="1" fill="#fff" />
<text x="1313.7" y="114.7" font-size="9.7" fill="#fff" textLength="31.4" lengthAdjust="spacingAndGlyphs" stroke="#fff" stroke-width="0.25">1.09530</text>
<rect x="1308" y="144" width="3" height="1" fill="#fff" />
<text x="1313.7" y="147.7" font-size="9.7" fill="#fff" textLength="31.4" lengthAdjust="spacingAndGlyphs" stroke="#fff" stroke-width="0.25">1.09400</text>
<rect x="1308" y="176" width="3" height="1" fill="#fff" />
<text x="1313.7" y="179.7" font-size="9.7" fill="#fff" textLength="31.4" lengthAdjust="spacingAndGlyphs" stroke="#fff" stroke-width="0.25">1.09270</text>
<rect x="1308" y="209" width="3" height="1" fill="#fff" />
<text x="1313.7" y="212.7" font-size="9.7" fill="#fff" textLength="31.4" lengthAdjust="spacingAndGlyphs" stroke="#fff" stroke-width="0.25">1.09140</text>
<rect x="1308" y="241" width="3" height="1" fill="#fff" />
<text x="1313.7" y="244.7" font-size="9.7" fill="#fff" textLength="31.4" lengthAdjust="spacingAndGlyphs" stroke="#fff" stroke-width="0.25">1.09010</text>
<rect x="1308" y="274" width="3" height="1" fill="#fff" />
<text x="1313.7" y="277.7" font-size="9.7" fill="#fff" textLength="31.4" lengthAdjust="spacingAndGlyphs" stroke="#fff" stroke-width="0.25">1.08880</text>
<rect x="1308" y="306" width="3" height="1" fill="#fff" />
<text x="1313.7" y="309.7" font-size="9.7" fill="#fff" textLength="31.4" lengthAdjust="spacingAndGlyphs" stroke="#fff" stroke-width="0.25">1.08750</text>
<rect x="1308" y="339" width="3" height="1" fill="#fff" />
<text x="1313.7" y="342.7" font-size="9.7" fill="#fff" textLength="31.4" lengthAdjust="spacingAndGlyphs" stroke="#fff" stroke-width="0.25">1.08620</text>
<rect x="1308" y="371" width="3" height="1" fill="#fff" />
<text x="1313.7" y="374.7" font-size="9.7" fill="#fff" textLength="31.4" lengthAdjust="spacingAndGlyphs" stroke="#fff" stroke-width="0.25">1.08490</text>
<rect x="1308" y="404" width="3" height="1" fill="#fff" />
<text x="1313.7" y="407.7" font-size="9.7" fill="#fff" textLength="31.4" lengthAdjust="spacingAndGlyphs" stroke="#fff" stroke-width="0.25">1.08360</text>
<rect x="4" y="437" width="1" height="4" fill="#fff" />
<text x="5" y="449" font-size="9.7" fill="#fff" textLength="48" lengthAdjust="spacingAndGlyphs" stroke="#fff" stroke-width="0.25">4 May 2020</text>
<rect x="68" y="437" width="1" height="4" fill="#fff" />
<text x="69" y="449" font-size="9.7" fill="#fff" textLength="51.6" lengthAdjust="spacingAndGlyphs" stroke="#fff" stroke-width="0.25">4 May 13:00</text>
<rect x="132" y="437" width="1" height="4" fill="#fff" />
<text x="133" y="449" font-size="9.7" fill="#fff" textLength="51.6" lengthAdjust="spacingAndGlyphs" stroke="#fff" stroke-width="0.25">4 May 15:00</text>
<rect x="196" y="437" width="1" height="4" fill="#fff" />
<text x="197" y="449" font-size="9.7" fill="#fff" textLength="51.6" lengthAdjust="spacingAndGlyphs" stroke="#fff" stroke-width="0.25">4 May 17:00</text>
<rect x="260" y="437" width="1" height="4" fill="#fff" />
<text x="261" y="449" font-size="9.7" fill="#fff" textLength="51.6" lengthAdjust="spacingAndGlyphs" stroke="#fff" stroke-width="0.25">4 May 19:00</text>
<rect x="324" y="437" width="1" height="4" fill="#fff" />
<text x="325" y="449" font-size="9.7" fill="#fff" textLength="51.6" lengthAdjust="spacingAndGlyphs" stroke="#fff" stroke-width="0.25">4 May 21:00</text>
<rect x="388" y="437" width="1" height="4" fill="#fff" />
<text x="389" y="449" font-size="9.7" fill="#fff" textLength="51.6" lengthAdjust="spacingAndGlyphs" stroke="#fff" stroke-width="0.25">4 May 23:00</text>
<rect x="452" y="437" width="1" height="4" fill="#fff" />
<text x="453" y="449" font-size="9.7" fill="#fff" textLength="51.6" lengthAdjust="spacingAndGlyphs" stroke="#fff" stroke-width="0.25">5 May 01:00</text>
<rect x="516" y="437" width="1" height="4" fill="#fff" />
<text x="517" y="449" font-size="9.7" fill="#fff" textLength="51.6" lengthAdjust="spacingAndGlyphs" stroke="#fff" stroke-width="0.25">5 May 03:00</text>
<rect x="580" y="437" width="1" height="4" fill="#fff" />
<text x="581" y="449" font-size="9.7" fill="#fff" textLength="51.6" lengthAdjust="spacingAndGlyphs" stroke="#fff" stroke-width="0.25">5 May 05:00</text>
<rect x="644" y="437" width="1" height="4" fill="#fff" />
<text x="645" y="449" font-size="9.7" fill="#fff" textLength="51.6" lengthAdjust="spacingAndGlyphs" stroke="#fff" stroke-width="0.25">5 May 07:00</text>
<rect x="708" y="437" width="1" height="4" fill="#fff" />
<text x="709" y="449" font-size="9.7" fill="#fff" textLength="51.6" lengthAdjust="spacingAndGlyphs" stroke="#fff" stroke-width="0.25">5 May 09:00</text>
<rect x="772" y="437" width="1" height="4" fill="#fff" />
<text x="773" y="449" font-size="9.7" fill="#fff" textLength="51.6" lengthAdjust="spacingAndGlyphs" stroke="#fff" stroke-width="0.25">5 May 11:00</text>
<rect x="836" y="437" width="1" height="4" fill="#fff" />
<text x="837" y="449" font-size="9.7" fill="#fff" textLength="51.6" lengthAdjust="spacingAndGlyphs" stroke="#fff" stroke-width="0.25">5 May 13:00</text>
<rect x="900" y="437" width="1" height="4" fill="#fff" />
<text x="901" y="449" font-size="9.7" fill="#fff" textLength="51.6" lengthAdjust="spacingAndGlyphs" stroke="#fff" stroke-width="0.25">5 May 15:00</text>
<rect x="964" y="437" width="1" height="4" fill="#fff" />
<text x="965" y="449" font-size="9.7" fill="#fff" textLength="51.6" lengthAdjust="spacingAndGlyphs" stroke="#fff" stroke-width="0.25">5 May 17:00</text>
<rect x="1028" y="437" width="1" height="4" fill="#fff" />
<text x="1029" y="449" font-size="9.7" fill="#fff" textLength="51.6" lengthAdjust="spacingAndGlyphs" stroke="#fff" stroke-width="0.25">5 May 19:00</text>
<rect x="1092" y="437" width="1" height="4" fill="#fff" />
<text x="1093" y="449" font-size="9.7" fill="#fff" textLength="51.6" lengthAdjust="spacingAndGlyphs" stroke="#fff" stroke-width="0.25">5 May 21:00</text>
<rect x="1156" y="437" width="1" height="4" fill="#fff" />
<text x="1157" y="449" font-size="9.7" fill="#fff" textLength="51.6" lengthAdjust="spacingAndGlyphs" stroke="#fff" stroke-width="0.25">5 May 23:00</text>
<rect x="1220" y="437" width="1" height="4" fill="#fff" />
<text x="1221" y="449" font-size="9.7" fill="#fff" textLength="51.6" lengthAdjust="spacingAndGlyphs" stroke="#fff" stroke-width="0.25">6 May 01:00</text>
<rect x="1284" y="437" width="1" height="4" fill="#fff" />
<text x="1285" y="449" font-size="9.7" fill="#fff" textLength="51.6" lengthAdjust="spacingAndGlyphs" stroke="#fff" stroke-width="0.25">6 May 03:00</text>
<path d="M5 430 l5 6 h-5 z" fill="#8a96a6"/>
<g><rect x="8.500" y="113" width="14" height="12" rx="1" fill="#fff"/><rect x="9.500" y="114" width="12" height="1.500" fill="#b4b4ee"/><rect x="10.500" y="116.5" width="4.500" height="1" fill="#e26060"/><rect x="16" y="116.5" width="4.500" height="1" fill="#6a6ae8"/><rect x="10.500" y="118.5" width="4.500" height="1" fill="#e26060"/><rect x="16" y="118.5" width="4.500" height="1" fill="#6a6ae8"/><rect x="10.500" y="120.5" width="4.500" height="1" fill="#e26060"/><rect x="16" y="120.5" width="4.500" height="1" fill="#6a6ae8"/><rect x="10.500" y="122.5" width="4.500" height="1" fill="#e26060"/><rect x="16" y="122.5" width="4.500" height="1" fill="#6a6ae8"/></g>
<g><path d="M25 114.500 h4.300 v4.400 h3 v5.800 h-7.300 z" fill="#2222e0"/><path d="M36.200 114.500 h3.700 v10.200 h-6.600 v-5.800 h2.900 z" fill="#c23030"/><path d="M29.800 114.500 h6 v2.600 h-2 v2.800 h-2 v-2.800 h-2 z" fill="#c4c4c4"/><rect x="26" y="123" width="5" height="0.800" fill="#8a8af0"/><rect x="34.300" y="123" width="4.600" height="0.800" fill="#e08080"/></g>
<text x="45" y="123" font-size="9.7" fill="#fff" textLength="147.5" lengthAdjust="spacingAndGlyphs" stroke="#fff" stroke-width="0.25">EURUSD, M30:  Euro vs US Dollar</text>
<text x="198.7" y="123" font-size="9.7" fill="#fff" textLength="140.3" lengthAdjust="spacingAndGlyphs" stroke="#fff" stroke-width="0.25">1.16274 1.16322 1.16271 1.16296</text>
<g clip-path="url(#cc)">
<text x="8" y="138" font-size="9.7" fill="#fff" textLength="247.6" lengthAdjust="spacingAndGlyphs" stroke="#fff" stroke-width="0.25">MasterTradePRO 2.0 [CustomApiRequestLicenseKey=; s1=</text>
<text x="260.6" y="138" font-size="9.7" fill="#fff" textLength="126.9" lengthAdjust="spacingAndGlyphs" stroke="#fff" stroke-width="0.25">- - - параметры ордеров - - - ;</text>
<text x="391.3" y="138" font-size="9.7" fill="#fff" textLength="62.7" lengthAdjust="spacingAndGlyphs" stroke="#fff" stroke-width="0.25">order_1_sw=1;</text>
<text x="457" y="138" font-size="9.7" fill="#fff" textLength="62.8" lengthAdjust="spacingAndGlyphs" stroke="#fff" stroke-width="0.25">order_2_sw=1;</text>
<text x="522.8" y="138" font-size="9.7" fill="#fff" textLength="84.2" lengthAdjust="spacingAndGlyphs" stroke="#fff" stroke-width="0.25">max_sum_orders=5;</text>
<text x="610" y="138" font-size="9.7" fill="#fff" textLength="35" lengthAdjust="spacingAndGlyphs" stroke="#fff" stroke-width="0.25">lot_v=2;</text>
<text x="648" y="138" font-size="9.7" fill="#fff" textLength="89.5" lengthAdjust="spacingAndGlyphs" stroke="#fff" stroke-width="0.25">lot_z=0.1; lot_risk=2;</text>
<text x="740.5" y="138" font-size="9.7" fill="#fff" textLength="46.5" lengthAdjust="spacingAndGlyphs" stroke="#fff" stroke-width="0.25">lot_mm=5;</text>
<text x="790" y="138" font-size="9.7" fill="#fff" textLength="61" lengthAdjust="spacingAndGlyphs" stroke="#fff" stroke-width="0.25">lot_splitting=1;</text>
<text x="854" y="138" font-size="9.7" fill="#fff" textLength="91.8" lengthAdjust="spacingAndGlyphs" stroke="#fff" stroke-width="0.25">lot_splitting_timer=10;</text>
<text x="948.8" y="138" font-size="9.7" fill="#fff" textLength="47.6" lengthAdjust="spacingAndGlyphs" stroke="#fff" stroke-width="0.25">slippage=0;</text>
<text x="999.4" y="138" font-size="9.7" fill="#fff" textLength="30.1" lengthAdjust="spacingAndGlyphs" stroke="#fff" stroke-width="0.25">mg=1;</text>
<text x="1032.5" y="138" font-size="9.7" fill="#fff" textLength="134.5" lengthAdjust="spacingAndGlyphs" stroke="#fff" stroke-width="0.25">comment=MasterTradePRO 2.0;</text>
<text x="1170" y="138" font-size="9.7" fill="#fff" textLength="136.5" lengthAdjust="spacingAndGlyphs" stroke="#fff" stroke-width="0.25">s8= - - - Риск Менеджер - - - ; ri</text>
</g>
<rect x="0" y="457" width="1366" height="2" fill="#fcfcfc" />
<rect x="0" y="459" width="1366" height="1" fill="#101010" />
<rect x="0" y="460" width="1366" height="18.5" fill="#f0f0f0" />
<rect x="0" y="478.5" width="1366" height="4.5" fill="#fbfbfb" />
<rect x="0" y="457" width="1.5" height="21.5" fill="#8c8c8c" />
<text x="15" y="473" font-size="11.6" fill="#6a6a6a" textLength="62.5" lengthAdjust="spacingAndGlyphs" >GBPUSD,H4</text>
<text x="99" y="473" font-size="11.6" fill="#6a6a6a" textLength="75" lengthAdjust="spacingAndGlyphs" >AUDUSD,Daily</text>
<text x="197" y="473" font-size="11.6" fill="#6a6a6a" textLength="58.5" lengthAdjust="spacingAndGlyphs" >USDJPY,H4</text>
<text x="279" y="473" font-size="11.6" fill="#6a6a6a" textLength="64" lengthAdjust="spacingAndGlyphs" >USDCAD,H4</text>
<text x="366.5" y="473" font-size="11.6" fill="#6a6a6a" textLength="62.5" lengthAdjust="spacingAndGlyphs" >USDCHF,H4</text>
<text x="453" y="473" font-size="11.6" fill="#6a6a6a" textLength="84" lengthAdjust="spacingAndGlyphs" >EURUSD,Weekly</text>
<text x="561" y="473" font-size="11.6" fill="#6a6a6a" textLength="73" lengthAdjust="spacingAndGlyphs" >EURCHF,Daily</text>
<text x="658" y="473" font-size="11.6" fill="#6a6a6a" textLength="69" lengthAdjust="spacingAndGlyphs" >EURUSD,M30</text>
<text x="751.5" y="473" font-size="11.6" fill="#6a6a6a" textLength="68" lengthAdjust="spacingAndGlyphs" >EURUSD,M30</text>
<text x="844" y="473" font-size="11.6" fill="#6a6a6a" textLength="69" lengthAdjust="spacingAndGlyphs" >EURUSD,M30</text>
<text x="937.5" y="473" font-size="11.6" fill="#6a6a6a" textLength="68" lengthAdjust="spacingAndGlyphs" >EURUSD,M30</text>
<rect x="88.0" y="462" width="1" height="14" fill="#7a7a7a" />
<rect x="184.5" y="462" width="1" height="14" fill="#7a7a7a" />
<rect x="266.0" y="462" width="1" height="14" fill="#7a7a7a" />
<rect x="354.5" y="462" width="1" height="14" fill="#7a7a7a" />
<rect x="440.0" y="462" width="1" height="14" fill="#7a7a7a" />
<rect x="548.5" y="462" width="1" height="14" fill="#7a7a7a" />
<rect x="645.5" y="462" width="1" height="14" fill="#7a7a7a" />
<rect x="739.0" y="462" width="1" height="14" fill="#7a7a7a" />
<rect x="831.5" y="462" width="1" height="14" fill="#7a7a7a" />
<rect x="925.0" y="462" width="1" height="14" fill="#7a7a7a" />
<rect x="1111" y="460" width="1" height="18.5" fill="#b8b8b8" />
<rect x="1020" y="478" width="91.5" height="0.8" fill="#b8b8b8" />
<rect x="1019" y="458.5" width="92" height="19.5" fill="#101010" />
<rect x="1020" y="457" width="90" height="20" fill="#fff" />
<text x="1030.5" y="473" font-size="11.6" fill="#000" textLength="68" lengthAdjust="spacingAndGlyphs" >EURUSD,M30</text>
<g shape-rendering="auto"><path d="M1331.200 466 v5.800 l-3.600 -2.900 z" fill="#9a9a9a"/><path d="M1349.900 466 v5.800 l3.600 -2.900 z" fill="#9a9a9a"/></g>
<rect x="1364.3" y="460" width="1.7" height="18.5" fill="#fbfbfb" />
<rect x="0" y="483" width="1366" height="255" fill="#f0f0f0" />
<rect x="15" y="483" width="1349" height="228" fill="#a0a0a0" />
<rect x="16" y="484" width="1347" height="227" fill="#fff" />
<rect x="1" y="497" width="12.7" height="236.5" fill="#ccdaec" />
<rect x="15" y="711" width="1" height="22" fill="#a0a0a0" />
<g shape-rendering="auto" stroke="#000" stroke-width="1.700"><line x1="4.300" y1="486.700" x2="9.500" y2="491"/><line x1="9.500" y1="486.700" x2="4.300" y2="491"/></g>
<text transform="translate(11.800,731) rotate(-90)" font-size="11.600" fill="#1a1a1a" textLength="87" lengthAdjust="spacingAndGlyphs">Тестер стратегий</text>
<g stroke="#c8c8c8" stroke-width="1" stroke-dasharray="3 3">
<line x1="53.5" y1="489" x2="53.5" y2="694"/>
<line x1="85.5" y1="489" x2="85.5" y2="694"/>
<line x1="117.5" y1="489" x2="117.5" y2="694"/>
<line x1="149.5" y1="489" x2="149.5" y2="694"/>
<line x1="181.5" y1="489" x2="181.5" y2="694"/>
<line x1="213.5" y1="489" x2="213.5" y2="694"/>
<line x1="245.5" y1="489" x2="245.5" y2="694"/>
<line x1="277.5" y1="489" x2="277.5" y2="694"/>
<line x1="309.5" y1="489" x2="309.5" y2="694"/>
<line x1="341.5" y1="489" x2="341.5" y2="694"/>
<line x1="373.5" y1="489" x2="373.5" y2="694"/>
<line x1="405.5" y1="489" x2="405.5" y2="694"/>
<line x1="437.5" y1="489" x2="437.5" y2="694"/>
<line x1="469.5" y1="489" x2="469.5" y2="694"/>
<line x1="501.5" y1="489" x2="501.5" y2="694"/>
<line x1="533.5" y1="489" x2="533.5" y2="694"/>
<line x1="565.5" y1="489" x2="565.5" y2="694"/>
<line x1="597.5" y1="489" x2="597.5" y2="694"/>
<line x1="629.5" y1="489" x2="629.5" y2="694"/>
<line x1="661.5" y1="489" x2="661.5" y2="694"/>
<line x1="693.5" y1="489" x2="693.5" y2="694"/>
<line x1="725.5" y1="489" x2="725.5" y2="694"/>
<line x1="757.5" y1="489" x2="757.5" y2="694"/>
<line x1="789.5" y1="489" x2="789.5" y2="694"/>
<line x1="821.5" y1="489" x2="821.5" y2="694"/>
<line x1="853.5" y1="489" x2="853.5" y2="694"/>
<line x1="885.5" y1="489" x2="885.5" y2="694"/>
<line x1="917.5" y1="489" x2="917.5" y2="694"/>
<line x1="949.5" y1="489" x2="949.5" y2="694"/>
<line x1="981.5" y1="489" x2="981.5" y2="694"/>
<line x1="1013.5" y1="489" x2="1013.5" y2="694"/>
<line x1="1045.5" y1="489" x2="1045.5" y2="694"/>
<line x1="1077.5" y1="489" x2="1077.5" y2="694"/>
<line x1="1109.5" y1="489" x2="1109.5" y2="694"/>
<line x1="1141.5" y1="489" x2="1141.5" y2="694"/>
<line x1="1173.5" y1="489" x2="1173.5" y2="694"/>
<line x1="1205.5" y1="489" x2="1205.5" y2="694"/>
<line x1="1237.5" y1="489" x2="1237.5" y2="694"/>
<line x1="1269.5" y1="489" x2="1269.5" y2="694"/>
<line x1="1301.5" y1="489" x2="1301.5" y2="694"/>
<line x1="21" y1="492.5" x2="1317" y2="492.5"/>
<line x1="21" y1="524.5" x2="1317" y2="524.5"/>
<line x1="21" y1="556.5" x2="1317" y2="556.5"/>
<line x1="21" y1="588.5" x2="1317" y2="588.5"/>
<line x1="21" y1="620.5" x2="1317" y2="620.5"/>
</g>
<rect x="20" y="654" width="1299" height="1" fill="#fff" />
<rect x="20.500" y="488.500" width="1297" height="165" fill="none" stroke="#000"/>
<rect x="20.500" y="655.500" width="1297" height="39" fill="none" stroke="#000"/>
<g fill="none" stroke-width="1.850" shape-rendering="auto" stroke-linejoin="round">
<polyline stroke="#10a810" points="21.0,638.9 28.5,638.9 35.5,643.1 43.6,634.4 49.8,634.4 56.9,639.9 64.9,625.1 76.2,625.1 79.9,624.4 94.9,624.4 101.2,621.1 128.8,621.1 136.3,643.6 143.8,630.6 151.3,630.6 158.9,625.6 172.6,625.6 180.2,619.3 191.4,619.3 200.2,621.1 209.0,613.1 224.0,613.1 231.5,608.8 245.3,609.3 252.8,601.0 266.6,601.0 274.1,601.0 280.4,603.8 289.2,592.5 310.5,592.5 316.8,601.8 324.3,581.7 339.3,581.7 340.0,581.7 347.0,581.7 353.3,600.0 360.8,594.3 367.6,601.8 375.1,566.0 388.9,566.0 396.4,570.0 403.9,562.4 418.9,562.4 425.2,573.0 432.7,554.9 447.8,554.9 454.0,562.2 461.6,545.9 476.6,545.9 483.4,569.2 490.4,515.3 511.7,515.3 519.2,506.1 526.7,528.4 534.2,526.6 541.3,519.1 548.0,555.4 555.5,542.9 563.1,553.7 570.6,537.4 578.1,537.4 584.4,539.9 591.9,530.4 599.4,530.4 606.4,536.1 613.9,529.1 650.8,529.1 657.8,525.4 668.3,525.4 670.0,525.4 678.0,532.9 686.3,517.1 694.6,517.1 701.3,516.1 730.2,516.1 736.4,523.6 743.4,513.3 757.7,513.3 764.7,529.9 772.3,529.1 780.3,516.6 787.0,545.9 794.6,527.9 807.8,527.9 814.1,529.9 823.4,527.4 859.2,526.6 866.2,580.0 874.3,578.0 881.3,569.2 888.0,646.2 895.6,611.1 910.1,611.1 917.4,625.6 924.4,603.8 946.9,603.8 953.2,599.8 960.2,635.1 967.7,619.3 975.0,637.6 982.0,618.1 989.5,618.1 996.6,621.1 999.8,616.8 1005.0,611.1 1018.8,611.1 1025.1,631.1 1033.8,616.8 1040.9,616.8 1047.6,603.8 1061.4,603.8 1069.7,609.8 1076.4,601.0 1084.0,601.8 1091.5,601.3 1099.0,596.0 1112.8,595.5 1119.0,608.1 1127.3,594.3 1135.3,595.5 1142.9,595.5 1150.4,593.0 1156.6,593.5 1162.9,598.0 1171.2,585.0 1185.5,585.5 1192.5,591.8 1199.7,577.5 1206.8,577.5 1213.8,581.7 1221.3,569.2 1228.8,569.2 1235.6,565.0 1241.9,590.0 1249.4,568.0 1256.9,565.0 1263.9,588.0 1271.4,579.2 1279.4,579.2 1287.0,574.7 1307.8,574.7"/>
<polyline stroke="#1414a4" points="21.0,638.1 28.5,638.1 36.1,633.9 51.1,633.9 58.6,628.9 72.4,628.9 79.9,624.4 87.4,623.8 94.9,621.1 122.5,621.1 128.8,629.4 143.8,629.4 151.3,624.4 166.4,623.8 173.9,621.1 191.4,620.6 201.5,613.1 216.5,613.1 224.0,608.1 239.1,608.1 246.6,603.8 260.4,603.8 266.6,600.0 275.4,599.8 282.9,591.8 310.5,591.8 318.0,580.7 339.3,580.7 340.0,580.7 361.3,580.7 368.1,573.0 383.1,573.0 390.1,564.7 397.6,562.2 418.9,562.2 426.5,554.2 447.8,554.2 454.8,544.9 476.6,544.9 483.4,529.1 497.9,529.1 505.4,514.1 534.2,514.1 541.0,540.9 556.0,540.9 563.1,536.1 577.6,536.1 585.1,529.1 606.9,529.1 613.9,528.4 644.5,528.4 650.8,524.9 668.3,524.9 670.0,525.4 672.5,524.1 679.5,519.8 694.6,519.8 701.3,516.1 730.2,516.1 737.2,512.1 772.3,512.1 779.8,527.1 816.6,527.1 819.1,525.9 874.3,525.9 881.3,568.0 895.6,568.0 902.6,610.1 910.1,610.1 918.1,602.5 968.2,602.5 974.5,616.8 989.5,616.8 997.1,610.1 999.8,610.1 1033.8,610.1 1041.4,603.0 1062.7,603.0 1070.2,600.0 1084.0,600.0 1091.5,594.8 1135.3,593.5 1142.9,592.3 1156.6,591.8 1164.2,587.5 1179.2,587.5 1193.0,576.2 1206.8,576.2 1214.3,568.0 1270.7,568.0 1277.7,573.5 1307.8,573.7"/>
</g>
<rect x="41" y="686.0" width="6" height="7.0" fill="#10a810" />
<rect x="63" y="679.0" width="6" height="14.0" fill="#10a810" />
<rect x="70" y="686.0" width="6" height="7.0" fill="#10a810" />
<rect x="99" y="686.0" width="6" height="7.0" fill="#10a810" />
<rect x="128" y="686.0" width="6" height="7.0" fill="#10a810" />
<rect x="157" y="686.0" width="6" height="7.0" fill="#10a810" />
<rect x="179" y="679.0" width="6" height="14.0" fill="#10a810" />
<rect x="186" y="686.0" width="6" height="7.0" fill="#10a810" />
<rect x="207" y="686.0" width="6" height="7.0" fill="#10a810" />
<rect x="229" y="686.0" width="6" height="7.0" fill="#10a810" />
<rect x="251" y="679.0" width="6" height="14.0" fill="#10a810" />
<rect x="258" y="686.0" width="6" height="7.0" fill="#10a810" />
<rect x="287" y="686.5" width="6" height="6.5" fill="#10a810" />
<rect x="323" y="686.5" width="6" height="6.5" fill="#10a810" />
<rect x="345" y="680.0" width="6" height="13.0" fill="#10a810" />
<rect x="360" y="680.0" width="6" height="13.0" fill="#10a810" />
<rect x="367" y="679.0" width="6" height="14.0" fill="#10a810" />
<rect x="374" y="680.0" width="6" height="13.0" fill="#10a810" />
<rect x="381" y="686.5" width="6" height="6.5" fill="#10a810" />
<rect x="403" y="686.0" width="6" height="7.0" fill="#10a810" />
<rect x="432" y="686.0" width="6" height="7.0" fill="#10a810" />
<rect x="460" y="686.0" width="6" height="7.0" fill="#10a810" />
<rect x="489" y="679.0" width="6" height="14.0" fill="#10a810" />
<rect x="497" y="686.0" width="6" height="7.0" fill="#10a810" />
<rect x="518" y="686.0" width="6" height="7.0" fill="#10a810" />
<rect x="533" y="686.0" width="6" height="7.0" fill="#10a810" />
<rect x="540" y="686.0" width="6" height="7.0" fill="#10a810" />
<rect x="547" y="686.0" width="6" height="7.0" fill="#10a810" />
<rect x="569" y="686.0" width="6" height="7.0" fill="#10a810" />
<rect x="591" y="686.0" width="6" height="7.0" fill="#10a810" />
<rect x="612" y="686.0" width="6" height="7.0" fill="#10a810" />
<rect x="656" y="686.0" width="6" height="7.0" fill="#10a810" />
<rect x="685" y="678.0" width="6" height="15.0" fill="#10a810" />
<rect x="692" y="686.0" width="6" height="7.0" fill="#10a810" />
<rect x="742" y="686.0" width="6" height="7.0" fill="#10a810" />
<rect x="772" y="686.0" width="6" height="7.0" fill="#10a810" />
<rect x="779" y="686.0" width="6" height="7.0" fill="#10a810" />
<rect x="786" y="686.0" width="6" height="7.0" fill="#10a810" />
<rect x="822" y="686.0" width="6" height="7.0" fill="#10a810" />
<rect x="858" y="678.0" width="6" height="15.0" fill="#10a810" />
<rect x="873" y="677.5" width="6" height="15.5" fill="#10a810" />
<rect x="880" y="677.0" width="6" height="16.0" fill="#10a810" />
<rect x="888" y="676.0" width="6" height="17.0" fill="#10a810" />
<rect x="895" y="685.0" width="6" height="8.0" fill="#10a810" />
<rect x="923" y="686.0" width="6" height="7.0" fill="#10a810" />
<rect x="952" y="686.5" width="6" height="6.5" fill="#10a810" />
<rect x="967" y="686.0" width="6" height="7.0" fill="#10a810" />
<rect x="974" y="686.0" width="6" height="7.0" fill="#10a810" />
<rect x="1003" y="686.0" width="6" height="7.0" fill="#10a810" />
<rect x="1017" y="686.0" width="6" height="7.0" fill="#10a810" />
<rect x="1032" y="686.0" width="6" height="7.0" fill="#10a810" />
<rect x="1039" y="686.0" width="6" height="7.0" fill="#10a810" />
<rect x="1046" y="686.0" width="6" height="7.0" fill="#10a810" />
<rect x="1075" y="686.0" width="6" height="7.0" fill="#10a810" />
<rect x="1097" y="687.0" width="6" height="6.0" fill="#10a810" />
<rect x="1111" y="687.0" width="6" height="6.0" fill="#10a810" />
<rect x="1147" y="687.0" width="6" height="6.0" fill="#10a810" />
<rect x="1169" y="680.0" width="6" height="13.0" fill="#10a810" />
<rect x="1176" y="687.0" width="6" height="6.0" fill="#10a810" />
<rect x="1198" y="687.0" width="6" height="6.0" fill="#10a810" />
<rect x="1220" y="687.0" width="6" height="6.0" fill="#10a810" />
<rect x="1234" y="686.0" width="6" height="7.0" fill="#10a810" />
<rect x="1248" y="685.0" width="6" height="8.0" fill="#10a810" />
<rect x="1256" y="685.5" width="6" height="7.5" fill="#10a810" />
<rect x="1263" y="685.0" width="6" height="8.0" fill="#10a810" />
<rect x="1270" y="685.0" width="6" height="8.0" fill="#10a810" />
<rect x="1278" y="685.0" width="6" height="8.0" fill="#10a810" />
<rect x="1285" y="685.0" width="6" height="8.0" fill="#10a810" />
<rect x="21" y="491" width="84" height="11" fill="#fff" />
<rect x="21" y="658.6" width="84" height="10.4" fill="#fff" />
<text x="24.8" y="499.8" font-size="9.7" fill="#0c0cb4" textLength="27.5" lengthAdjust="spacingAndGlyphs" stroke="#0c0cb4" stroke-width="0.2">Баланс</text>
<text x="56.6" y="499.8" font-size="9.7" fill="#222" textLength="2.8" lengthAdjust="spacingAndGlyphs" >/</text>
<text x="63" y="499.8" font-size="9.7" fill="#10a810" textLength="40.7" lengthAdjust="spacingAndGlyphs" stroke="#10a810" stroke-width="0.2">Средства</text>
<text x="24.3" y="667" font-size="9.7" fill="#111" textLength="79.4" lengthAdjust="spacingAndGlyphs" stroke="#111" stroke-width="0.2">Загрузка депозита</text>
<rect x="1318" y="492" width="1.2" height="1" fill="#000" />
<text x="1322.8" y="496.4" font-size="9.7" fill="#111" textLength="19" lengthAdjust="spacingAndGlyphs" stroke="#111" stroke-width="0.2">1218</text>
<rect x="1318" y="524" width="1.2" height="1" fill="#000" />
<text x="1322.8" y="528.4" font-size="9.7" fill="#111" textLength="19" lengthAdjust="spacingAndGlyphs" stroke="#111" stroke-width="0.2">1170</text>
<rect x="1318" y="556" width="1.2" height="1" fill="#000" />
<text x="1322.8" y="560.4" font-size="9.7" fill="#111" textLength="19" lengthAdjust="spacingAndGlyphs" stroke="#111" stroke-width="0.2">1122</text>
<rect x="1318" y="588" width="1.2" height="1" fill="#000" />
<text x="1322.8" y="592.4" font-size="9.7" fill="#111" textLength="19" lengthAdjust="spacingAndGlyphs" stroke="#111" stroke-width="0.2">1074</text>
<rect x="1318" y="620" width="1.2" height="1" fill="#000" />
<text x="1322.8" y="624.4" font-size="9.7" fill="#111" textLength="19" lengthAdjust="spacingAndGlyphs" stroke="#111" stroke-width="0.2">1026</text>
<rect x="1318" y="652" width="1.2" height="1" fill="#000" />
<text x="1322.8" y="656.4" font-size="9.7" fill="#111" textLength="14.5" lengthAdjust="spacingAndGlyphs" stroke="#111" stroke-width="0.2">978</text>
<rect x="1321" y="657" width="30" height="9" fill="#fff" />
<text x="1322.3" y="665" font-size="9.7" fill="#111" textLength="27.2" lengthAdjust="spacingAndGlyphs" stroke="#111" stroke-width="0.2">25.0%</text>
<rect x="21" y="695" width="1" height="1.2" fill="#000" />
<rect x="53" y="695" width="1" height="1.2" fill="#000" />
<rect x="85" y="695" width="1" height="1.2" fill="#000" />
<rect x="117" y="695" width="1" height="1.2" fill="#000" />
<rect x="149" y="695" width="1" height="1.2" fill="#000" />
<rect x="181" y="695" width="1" height="1.2" fill="#000" />
<rect x="213" y="695" width="1" height="1.2" fill="#000" />
<rect x="245" y="695" width="1" height="1.2" fill="#000" />
<rect x="277" y="695" width="1" height="1.2" fill="#000" />
<rect x="309" y="695" width="1" height="1.2" fill="#000" />
<rect x="341" y="695" width="1" height="1.2" fill="#000" />
<rect x="373" y="695" width="1" height="1.2" fill="#000" />
<rect x="405" y="695" width="1" height="1.2" fill="#000" />
<rect x="437" y="695" width="1" height="1.2" fill="#000" />
<rect x="469" y="695" width="1" height="1.2" fill="#000" />
<rect x="501" y="695" width="1" height="1.2" fill="#000" />
<rect x="533" y="695" width="1" height="1.2" fill="#000" />
<rect x="565" y="695" width="1" height="1.2" fill="#000" />
<rect x="597" y="695" width="1" height="1.2" fill="#000" />
<rect x="629" y="695" width="1" height="1.2" fill="#000" />
<rect x="661" y="695" width="1" height="1.2" fill="#000" />
<rect x="693" y="695" width="1" height="1.2" fill="#000" />
<rect x="725" y="695" width="1" height="1.2" fill="#000" />
<rect x="757" y="695" width="1" height="1.2" fill="#000" />
<rect x="789" y="695" width="1" height="1.2" fill="#000" />
<rect x="821" y="695" width="1" height="1.2" fill="#000" />
<rect x="853" y="695" width="1" height="1.2" fill="#000" />
<rect x="885" y="695" width="1" height="1.2" fill="#000" />
<rect x="917" y="695" width="1" height="1.2" fill="#000" />
<rect x="949" y="695" width="1" height="1.2" fill="#000" />
<rect x="981" y="695" width="1" height="1.2" fill="#000" />
<rect x="1013" y="695" width="1" height="1.2" fill="#000" />
<rect x="1045" y="695" width="1" height="1.2" fill="#000" />
<rect x="1077" y="695" width="1" height="1.2" fill="#000" />
<rect x="1109" y="695" width="1" height="1.2" fill="#000" />
<rect x="1141" y="695" width="1" height="1.2" fill="#000" />
<rect x="1173" y="695" width="1" height="1.2" fill="#000" />
<rect x="1205" y="695" width="1" height="1.2" fill="#000" />
<rect x="1237" y="695" width="1" height="1.2" fill="#000" />
<rect x="1269" y="695" width="1" height="1.2" fill="#000" />
<rect x="1301" y="695" width="1" height="1.2" fill="#000" />
<text x="22.4" y="704.8" font-size="9.7" fill="#111" textLength="45.3" lengthAdjust="spacingAndGlyphs" stroke="#111" stroke-width="0.2">2020.05.01</text>
<text x="86.4" y="704.8" font-size="9.7" fill="#111" textLength="45.3" lengthAdjust="spacingAndGlyphs" stroke="#111" stroke-width="0.2">2020.05.06</text>
<text x="150.4" y="704.8" font-size="9.7" fill="#111" textLength="45.3" lengthAdjust="spacingAndGlyphs" stroke="#111" stroke-width="0.2">2020.05.13</text>
<text x="214.4" y="704.8" font-size="9.7" fill="#111" textLength="45.3" lengthAdjust="spacingAndGlyphs" stroke="#111" stroke-width="0.2">2020.05.15</text>
<text x="278.4" y="704.8" font-size="9.7" fill="#111" textLength="45.3" lengthAdjust="spacingAndGlyphs" stroke="#111" stroke-width="0.2">2020.05.21</text>
<text x="342.4" y="704.8" font-size="9.7" fill="#111" textLength="45.3" lengthAdjust="spacingAndGlyphs" stroke="#111" stroke-width="0.2">2020.05.28</text>
<text x="406.4" y="704.8" font-size="9.7" fill="#111" textLength="45.3" lengthAdjust="spacingAndGlyphs" stroke="#111" stroke-width="0.2">2020.06.02</text>
<text x="470.4" y="704.8" font-size="9.7" fill="#111" textLength="45.3" lengthAdjust="spacingAndGlyphs" stroke="#111" stroke-width="0.2">2020.06.08</text>
<text x="534.4" y="704.8" font-size="9.7" fill="#111" textLength="45.3" lengthAdjust="spacingAndGlyphs" stroke="#111" stroke-width="0.2">2020.06.15</text>
<text x="598.4" y="704.8" font-size="9.7" fill="#111" textLength="45.3" lengthAdjust="spacingAndGlyphs" stroke="#111" stroke-width="0.2">2020.06.18</text>
<text x="662.4" y="704.8" font-size="9.7" fill="#111" textLength="45.3" lengthAdjust="spacingAndGlyphs" stroke="#111" stroke-width="0.2">2020.06.26</text>
<text x="726.4" y="704.8" font-size="9.7" fill="#111" textLength="45.3" lengthAdjust="spacingAndGlyphs" stroke="#111" stroke-width="0.2">2020.07.06</text>
<text x="790.4" y="704.8" font-size="9.7" fill="#111" textLength="45.3" lengthAdjust="spacingAndGlyphs" stroke="#111" stroke-width="0.2">2020.07.13</text>
<text x="854.4" y="704.8" font-size="9.7" fill="#111" textLength="45.3" lengthAdjust="spacingAndGlyphs" stroke="#111" stroke-width="0.2">2020.07.23</text>
<text x="918.4" y="704.8" font-size="9.7" fill="#111" textLength="45.3" lengthAdjust="spacingAndGlyphs" stroke="#111" stroke-width="0.2">2020.07.30</text>
<text x="982.4" y="704.8" font-size="9.7" fill="#111" textLength="45.3" lengthAdjust="spacingAndGlyphs" stroke="#111" stroke-width="0.2">2020.08.06</text>
<text x="1046.4" y="704.8" font-size="9.7" fill="#111" textLength="45.3" lengthAdjust="spacingAndGlyphs" stroke="#111" stroke-width="0.2">2020.08.11</text>
<text x="1110.4" y="704.8" font-size="9.7" fill="#111" textLength="45.3" lengthAdjust="spacingAndGlyphs" stroke="#111" stroke-width="0.2">2020.08.14</text>
<text x="1174.4" y="704.8" font-size="9.7" fill="#111" textLength="45.3" lengthAdjust="spacingAndGlyphs" stroke="#111" stroke-width="0.2">2020.08.19</text>
<text x="1238.4" y="704.8" font-size="9.7" fill="#111" textLength="45.3" lengthAdjust="spacingAndGlyphs" stroke="#111" stroke-width="0.2">2020.08.24</text>
<text x="1302.4" y="704.8" font-size="9.7" fill="#111" textLength="45.3" lengthAdjust="spacingAndGlyphs" stroke="#111" stroke-width="0.2">2020.08.27</text>
<rect x="1321" y="689.5" width="25" height="12" fill="#fff" />
<text x="1322.3" y="697.7" font-size="9.7" fill="#111" textLength="21.9" lengthAdjust="spacingAndGlyphs" stroke="#111" stroke-width="0.2">0.0%</text>
<rect x="15" y="733" width="1349" height="1" fill="#f0f0f0" />
<rect x="0" y="733.5" width="1366" height="2" fill="#fbfbfb" />
<rect x="0" y="735.5" width="1366" height="1.5" fill="#b4b4b4" />
<rect x="0" y="737" width="1366" height="1" fill="#f0f0f0" />
<rect x="1363" y="483" width="3" height="250.5" fill="#f0f0f0" />
<rect x="16" y="711" width="1347" height="1" fill="#101010" />
<rect x="16" y="712" width="1347" height="21" fill="#f0f0f0" />
<text x="28.6" y="724.7" font-size="11.6" fill="#6a6a6a" textLength="33.8" lengthAdjust="spacingAndGlyphs" >Обзор</text>
<text x="83.3" y="724.7" font-size="11.6" fill="#6a6a6a" textLength="59.4" lengthAdjust="spacingAndGlyphs" >Настройки</text>
<text x="163.3" y="724.7" font-size="11.6" fill="#6a6a6a" textLength="63.4" lengthAdjust="spacingAndGlyphs" >Параметры</text>
<text x="247.3" y="724.7" font-size="11.6" fill="#6a6a6a" textLength="41" lengthAdjust="spacingAndGlyphs" >Бэктест</text>
<text x="370" y="724.7" font-size="11.6" fill="#6a6a6a" textLength="39.3" lengthAdjust="spacingAndGlyphs" >Агенты</text>
<text x="430" y="724.7" font-size="11.6" fill="#6a6a6a" textLength="42.7" lengthAdjust="spacingAndGlyphs" >Журнал</text>
<rect x="73.0" y="715" width="1" height="14" fill="#7a7a7a" />
<rect x="153.0" y="715" width="1" height="14" fill="#7a7a7a" />
<rect x="237.0" y="715" width="1" height="14" fill="#7a7a7a" />
<rect x="419.5" y="715" width="1" height="14" fill="#7a7a7a" />
<rect x="360" y="712" width="1" height="19.5" fill="#b8b8b8" />
<rect x="299" y="731" width="61.5" height="0.8" fill="#b8b8b8" />
<rect x="298" y="711" width="62" height="20" fill="#101010" />
<rect x="299" y="710" width="60" height="20" fill="#fff" />
<text x="308.3" y="724.7" font-size="11.6" fill="#000" textLength="41" lengthAdjust="spacingAndGlyphs" >График</text>
<text x="1176" y="727" font-size="11.6" fill="#222" textLength="94.6" lengthAdjust="spacingAndGlyphs" >00:27:45 / 00:27:46</text>
<rect x="1280" y="714" width="81" height="17" fill="#99cc66" />
<text x="1305.7" y="727" font-size="11.6" fill="#111" textLength="30.6" lengthAdjust="spacingAndGlyphs" >Старт</text>
</svg>
</body></html>
